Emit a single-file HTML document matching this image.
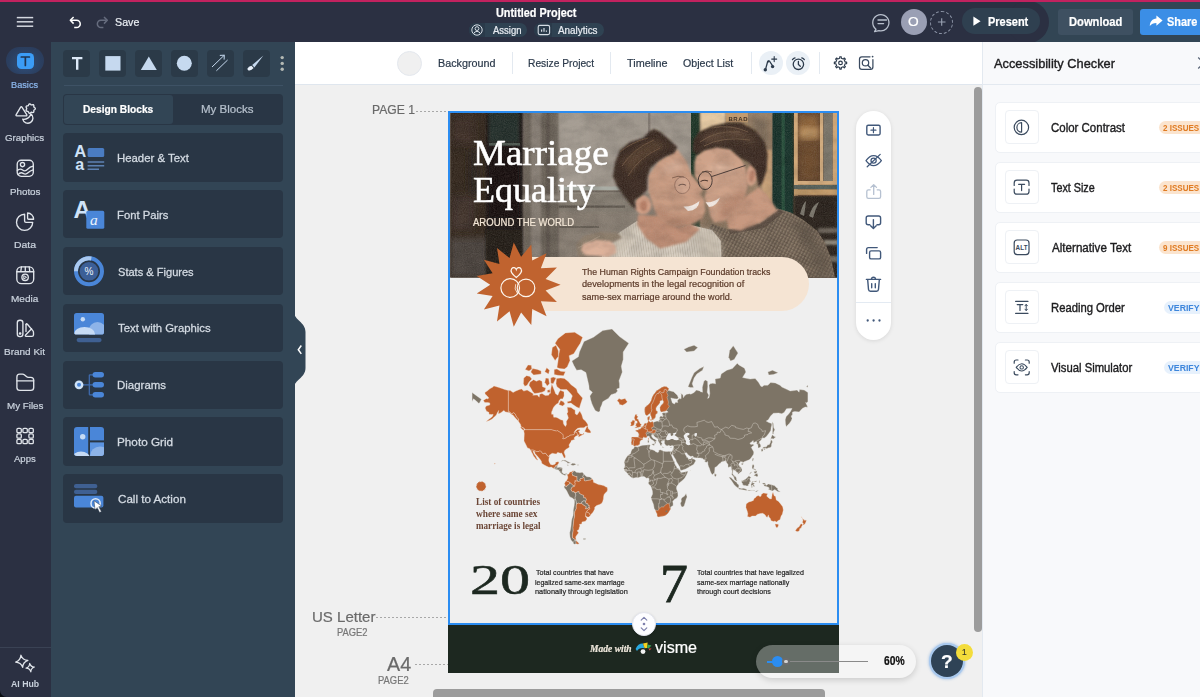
<!DOCTYPE html>
<html lang="en"><head><meta charset="utf-8"><title>Untitled Project - Visme</title>
<style>
*{box-sizing:border-box;margin:0;padding:0}
html,body{width:1200px;height:697px;overflow:hidden;background:#f0f0f0;font-family:"Liberation Sans",sans-serif}
.a{position:absolute}
.t{position:absolute;white-space:pre;line-height:1}
svg{position:absolute;overflow:visible}
#hdr{left:0;top:0;width:1200px;height:42px;background:#2b3042}
#pink{left:0;top:0;width:1200px;height:1.6px;background:#c2225f}
#hdrR{left:1027px;top:2px;width:173px;height:40px;background:#324554}
#hdrCap{left:1007px;top:1px;width:42px;height:42px;border-radius:21px;background:#2b3042}
#nav{left:0;top:42px;width:51px;height:655px;background:#2b3042}
#panel{left:51px;top:42px;width:244px;height:655px;background:#324555}
#tbar{left:295px;top:42px;width:688px;height:43px;background:#fff;border-bottom:1px solid #dfe6ee}
#rp{left:982px;top:42px;width:218px;height:655px;background:#f8f9fb;border-left:1px solid #e3e9f0}
#rph{left:983px;top:42px;width:217px;height:43px;border-bottom:1px solid #e3e9f0}
.tool{width:27px;height:27px;top:50px;border-radius:4px;background:#2b3a48}
.card{left:63px;width:220px;height:48.4px;border-radius:4px;background:#293645}
.rc{left:994.5px;width:215px;height:51.5px;border-radius:5px;background:#fff;border:1px solid #eef1f5}
.ib{left:1004.5px;width:34px;height:34px;border-radius:4px;background:#fff;border:1px solid #eef1f5}
.badge{height:13.5px;border-radius:7px;left:1159px;width:60px}
.vsep{width:1px;background:#e3e9f0;top:52px;height:22px}
</style></head><body>
<div id="hdr" class="a"></div>
<div id="hdrR" class="a"></div>
<div id="hdrCap" class="a"></div>
<div id="pink" class="a"></div>
<div id="nav" class="a"></div>
<div id="panel" class="a"></div>
<div id="tbar" class="a"></div>
<div id="rp" class="a"></div>
<div id="rph" class="a"></div>
<span class="t" style="left:115.03px;top:17.37px;font:normal 400 11.5px/1 'Liberation Sans', sans-serif;color:#e8ecf2;transform:scaleX(0.9307);transform-origin:0 0;-webkit-text-stroke:0.22px #e8ecf2;">Save</span>
<span class="t" style="left:496.04px;top:7.19px;font:normal 700 12.3px/1 'Liberation Sans', sans-serif;color:#ffffff;transform:scaleX(0.8844);transform-origin:0 0;-webkit-text-stroke:0.22px #ffffff;">Untitled Project</span>
<div class="a" style="left:468.7px;top:23px;width:58.8px;height:14px;border-radius:7px;background:#2f4252"></div>
<div class="a" style="left:468.7px;top:23px;width:16.5px;height:14px;border-radius:7px 0 0 7px;background:#2a3a4a"></div>
<div class="a" style="left:533.8px;top:23px;width:70.2px;height:14px;border-radius:7px;background:#2f4252"></div>
<div class="a" style="left:533.8px;top:23px;width:18px;height:14px;border-radius:7px 0 0 7px;background:#2a3a4a"></div>
<span class="t" style="left:493.00px;top:26.04px;font:normal 400 10px/1 'Liberation Sans', sans-serif;color:#e8ecf2;transform:scaleX(0.9492);transform-origin:0 0;-webkit-text-stroke:0.22px #e8ecf2;">Assign</span>
<span class="t" style="left:558.00px;top:26.04px;font:normal 400 10px/1 'Liberation Sans', sans-serif;color:#e8ecf2;transform:scaleX(0.9887);transform-origin:0 0;-webkit-text-stroke:0.22px #e8ecf2;">Analytics</span>
<div class="a" style="left:961.7px;top:8px;width:78.3px;height:26px;border-radius:13px;background:#2f4050"></div>
<span class="t" style="left:987.83px;top:15.79px;font:normal 700 12.3px/1 'Liberation Sans', sans-serif;color:#ffffff;transform:scaleX(0.8927);transform-origin:0 0;-webkit-text-stroke:0.22px #ffffff;">Present</span>
<div class="a" style="left:1058.3px;top:8.7px;width:75px;height:26.3px;border-radius:3px;background:#3e5061"></div>
<span class="t" style="left:1069.32px;top:15.89px;font:normal 700 12.3px/1 'Liberation Sans', sans-serif;color:#ffffff;transform:scaleX(0.9083);transform-origin:0 0;-webkit-text-stroke:0.22px #ffffff;">Download</span>
<div class="a" style="left:1140px;top:8.7px;width:70px;height:26.3px;border-radius:3px;background:#3b8ee6"></div>
<span class="t" style="left:1167.06px;top:15.89px;font:normal 700 12.3px/1 'Liberation Sans', sans-serif;color:#ffffff;transform:scaleX(0.8872);transform-origin:0 0;-webkit-text-stroke:0.22px #ffffff;">Share</span>
<div class="a" style="left:900.7px;top:9px;width:26px;height:26px;border-radius:13px;background:#9a9fb4"></div>
<span class="t" style="left:908.47px;top:15.30px;font:normal 400 13px/1 'Liberation Sans', sans-serif;color:#ffffff;transform:scaleX(1.0556);transform-origin:0 0;-webkit-text-stroke:0.22px #ffffff;">O</span>
<div class="a" style="left:930.2px;top:10.5px;width:23px;height:23px;border-radius:12px;border:1px dashed #8a92a4"></div>
<span class="t" style="left:11.18px;top:79.87px;font:normal 400 9.6px/1 'Liberation Sans', sans-serif;color:#8db8ee;transform:scaleX(0.9578);transform-origin:0 0;-webkit-text-stroke:0.22px #8db8ee;">Basics</span>
<span class="t" style="left:5.49px;top:133.37px;font:normal 400 9.6px/1 'Liberation Sans', sans-serif;color:#c9d1dc;transform:scaleX(1.0160);transform-origin:0 0;-webkit-text-stroke:0.22px #c9d1dc;">Graphics</span>
<span class="t" style="left:9.94px;top:186.87px;font:normal 400 9.6px/1 'Liberation Sans', sans-serif;color:#c9d1dc;transform:scaleX(1.0191);transform-origin:0 0;-webkit-text-stroke:0.22px #c9d1dc;">Photos</span>
<span class="t" style="left:13.68px;top:240.37px;font:normal 400 9.6px/1 'Liberation Sans', sans-serif;color:#c9d1dc;transform:scaleX(1.0872);transform-origin:0 0;-webkit-text-stroke:0.22px #c9d1dc;">Data</span>
<span class="t" style="left:10.92px;top:293.87px;font:normal 400 9.6px/1 'Liberation Sans', sans-serif;color:#c9d1dc;transform:scaleX(1.0431);transform-origin:0 0;-webkit-text-stroke:0.22px #c9d1dc;">Media</span>
<span class="t" style="left:4.22px;top:347.37px;font:normal 400 9.6px/1 'Liberation Sans', sans-serif;color:#c9d1dc;transform:scaleX(1.0400);transform-origin:0 0;-webkit-text-stroke:0.22px #c9d1dc;">Brand Kit</span>
<span class="t" style="left:6.54px;top:400.87px;font:normal 400 9.6px/1 'Liberation Sans', sans-serif;color:#c9d1dc;transform:scaleX(1.0187);transform-origin:0 0;-webkit-text-stroke:0.22px #c9d1dc;">My Files</span>
<span class="t" style="left:14.30px;top:454.37px;font:normal 400 9.6px/1 'Liberation Sans', sans-serif;color:#c9d1dc;transform:scaleX(0.9953);transform-origin:0 0;-webkit-text-stroke:0.22px #c9d1dc;">Apps</span>
<div class="a" style="left:5.6px;top:46.9px;width:38.8px;height:27.5px;border-radius:14px;background:radial-gradient(ellipse at 50% 60%,#30507c 0%,#2b3f60 60%,#2a3854 100%)"></div>
<div class="a" style="left:16.9px;top:52.5px;width:16.9px;height:16.5px;border-radius:4.5px;background:#3b9cf6"></div>
<div class="a" style="left:0;top:647px;width:51px;height:1px;background:#3a4254"></div>
<span class="t" style="left:11.05px;top:680.15px;font:normal 700 8.8px/1 'Liberation Sans', sans-serif;color:#c9d1dc;transform:scaleX(0.9946);transform-origin:0 0;">AI Hub</span>
<div class="a tool" style="left:63.40px"></div>
<div class="a tool" style="left:99.25px"></div>
<div class="a tool" style="left:135.10px"></div>
<div class="a tool" style="left:170.95px"></div>
<div class="a tool" style="left:206.80px"></div>
<div class="a tool" style="left:242.65px"></div>
<div class="a" style="left:63.5px;top:84.5px;width:219px;height:1px;background:#3e5265"></div>
<div class="a" style="left:63px;top:93.6px;width:220.3px;height:31px;border-radius:4px;background:#293645"></div>
<div class="a" style="left:64px;top:94.6px;width:108.5px;height:29px;border-radius:3px;background:#324555"></div>
<span class="t" style="left:82.70px;top:103.59px;font:normal 700 11px/1 'Liberation Sans', sans-serif;color:#ffffff;transform:scaleX(0.9271);transform-origin:0 0;-webkit-text-stroke:0.22px #ffffff;">Design Blocks</span>
<span class="t" style="left:200.65px;top:103.59px;font:normal 400 11px/1 'Liberation Sans', sans-serif;color:#b6c0cc;transform:scaleX(1.0462);transform-origin:0 0;-webkit-text-stroke:0.22px #b6c0cc;">My Blocks</span>
<div class="a card" style="top:133.20px"></div>
<span class="t" style="left:117.32px;top:151.88px;font:normal 400 11.6px/1 'Liberation Sans', sans-serif;color:#d3dae2;transform:scaleX(0.9813);transform-origin:0 0;-webkit-text-stroke:0.3px #d3dae2;">Header &amp; Text</span>
<div class="a card" style="top:190.03px"></div>
<span class="t" style="left:117.33px;top:208.71px;font:normal 400 11.6px/1 'Liberation Sans', sans-serif;color:#d3dae2;transform:scaleX(0.9709);transform-origin:0 0;-webkit-text-stroke:0.3px #d3dae2;">Font Pairs</span>
<div class="a card" style="top:246.86px"></div>
<span class="t" style="left:117.82px;top:265.54px;font:normal 400 11.6px/1 'Liberation Sans', sans-serif;color:#d3dae2;transform:scaleX(0.9546);transform-origin:0 0;-webkit-text-stroke:0.3px #d3dae2;">Stats &amp; Figures</span>
<div class="a card" style="top:303.69px"></div>
<span class="t" style="left:118.06px;top:322.37px;font:normal 400 11.6px/1 'Liberation Sans', sans-serif;color:#d3dae2;transform:scaleX(0.9787);transform-origin:0 0;-webkit-text-stroke:0.3px #d3dae2;">Text with Graphics</span>
<div class="a card" style="top:360.52px"></div>
<span class="t" style="left:117.31px;top:379.20px;font:normal 400 11.6px/1 'Liberation Sans', sans-serif;color:#d3dae2;transform:scaleX(0.9886);transform-origin:0 0;-webkit-text-stroke:0.3px #d3dae2;">Diagrams</span>
<div class="a card" style="top:417.35px"></div>
<span class="t" style="left:117.29px;top:436.03px;font:normal 400 11.6px/1 'Liberation Sans', sans-serif;color:#d3dae2;transform:scaleX(1.0121);transform-origin:0 0;-webkit-text-stroke:0.3px #d3dae2;">Photo Grid</span>
<div class="a card" style="top:474.18px"></div>
<span class="t" style="left:117.80px;top:492.86px;font:normal 400 11.6px/1 'Liberation Sans', sans-serif;color:#d3dae2;transform:scaleX(1.0030);transform-origin:0 0;-webkit-text-stroke:0.3px #d3dae2;">Call to Action</span>
<svg style="left:294px;top:312px" width="12" height="76" viewBox="0 0 12 76"><path d="M0 0 C0 8 11.5 10 11.5 20 L11.5 56 C11.5 66 0 68 0 76 Z" fill="#324555"/><path d="M7.3 33.5 L4.3 37.7 L7.3 41.9" fill="none" stroke="#fff" stroke-width="1.5"/></svg>
<div class="a" style="left:396.5px;top:50.5px;width:25px;height:25px;border-radius:13px;background:#f0f0f0;border:1px solid #e4e8ee"></div>
<span class="t" style="left:438.07px;top:56.98px;font:normal 400 11.6px/1 'Liberation Sans', sans-serif;color:#2c3a4b;transform:scaleX(0.9295);transform-origin:0 0;-webkit-text-stroke:0.22px #2c3a4b;">Background</span>
<span class="t" style="left:527.62px;top:56.98px;font:normal 400 11.6px/1 'Liberation Sans', sans-serif;color:#2c3a4b;transform:scaleX(0.8841);transform-origin:0 0;-webkit-text-stroke:0.22px #2c3a4b;">Resize Project</span>
<span class="t" style="left:626.77px;top:56.98px;font:normal 400 11.6px/1 'Liberation Sans', sans-serif;color:#2c3a4b;transform:scaleX(0.9357);transform-origin:0 0;-webkit-text-stroke:0.22px #2c3a4b;">Timeline</span>
<span class="t" style="left:682.84px;top:56.98px;font:normal 400 11.6px/1 'Liberation Sans', sans-serif;color:#2c3a4b;transform:scaleX(0.9161);transform-origin:0 0;-webkit-text-stroke:0.22px #2c3a4b;">Object List</span>
<div class="a vsep" style="left:511.5px"></div>
<div class="a vsep" style="left:610.3px"></div>
<div class="a vsep" style="left:750.5px"></div>
<div class="a vsep" style="left:819px"></div>
<div class="a" style="left:759px;top:51px;width:24px;height:24px;border-radius:12px;background:#eaf0f6"></div>
<div class="a" style="left:786.3px;top:51px;width:24px;height:24px;border-radius:12px;background:#eaf0f6"></div>
<span class="t" style="left:994.00px;top:57.00px;font:normal 400 13px/1 'Liberation Sans', sans-serif;color:#1d1d1f;transform:scaleX(0.9853);transform-origin:0 0;-webkit-text-stroke:0.38px #1d1d1f;">Accessibility Checker</span>
<div class="a rc" style="top:101.5px"></div>
<div class="a ib" style="top:110.2px"></div>
<span class="t" style="left:1051.13px;top:121.57px;font:normal 400 12.2px/1 'Liberation Sans', sans-serif;color:#1d1d1f;transform:scaleX(0.9410);transform-origin:0 0;-webkit-text-stroke:0.38px #1d1d1f;">Color Contrast</span>
<div class="a badge" style="top:120.9px;background:#fbe4ce"></div>
<span class="t" style="left:1163.45px;top:124.76px;font:normal 700 8.2px/1 'Liberation Sans', sans-serif;color:#e07b22;transform:scaleX(0.9821);transform-origin:0 0;">2 ISSUES</span>
<div class="a rc" style="top:161.5px"></div>
<div class="a ib" style="top:170.2px"></div>
<span class="t" style="left:1051.38px;top:181.57px;font:normal 400 12.2px/1 'Liberation Sans', sans-serif;color:#1d1d1f;transform:scaleX(0.8841);transform-origin:0 0;-webkit-text-stroke:0.38px #1d1d1f;">Text Size</span>
<div class="a badge" style="top:180.9px;background:#fbe4ce"></div>
<span class="t" style="left:1163.45px;top:184.76px;font:normal 700 8.2px/1 'Liberation Sans', sans-serif;color:#e07b22;transform:scaleX(0.9821);transform-origin:0 0;">2 ISSUES</span>
<div class="a rc" style="top:221.5px"></div>
<div class="a ib" style="top:230.2px"></div>
<span class="t" style="left:1051.60px;top:241.57px;font:normal 400 12.2px/1 'Liberation Sans', sans-serif;color:#1d1d1f;transform:scaleX(0.9530);transform-origin:0 0;-webkit-text-stroke:0.38px #1d1d1f;">Alternative Text</span>
<div class="a badge" style="top:240.9px;background:#fbe4ce"></div>
<span class="t" style="left:1163.45px;top:244.76px;font:normal 700 8.2px/1 'Liberation Sans', sans-serif;color:#e07b22;transform:scaleX(0.9821);transform-origin:0 0;">9 ISSUES</span>
<div class="a rc" style="top:281.5px"></div>
<div class="a ib" style="top:290.2px"></div>
<span class="t" style="left:1050.68px;top:301.57px;font:normal 400 12.2px/1 'Liberation Sans', sans-serif;color:#1d1d1f;transform:scaleX(0.9232);transform-origin:0 0;-webkit-text-stroke:0.38px #1d1d1f;">Reading Order</span>
<div class="a badge" style="top:300.9px;background:#e7f1fc;left:1163.5px"></div>
<span class="t" style="left:1168.33px;top:304.76px;font:normal 700 8.2px/1 'Liberation Sans', sans-serif;color:#3d86dc;transform:scaleX(1.0655);transform-origin:0 0;">VERIFY</span>
<div class="a rc" style="top:341.5px"></div>
<div class="a ib" style="top:350.2px"></div>
<span class="t" style="left:1051.37px;top:361.57px;font:normal 400 12.2px/1 'Liberation Sans', sans-serif;color:#1d1d1f;transform:scaleX(0.9249);transform-origin:0 0;-webkit-text-stroke:0.38px #1d1d1f;">Visual Simulator</span>
<div class="a badge" style="top:360.9px;background:#e7f1fc;left:1163.5px"></div>
<span class="t" style="left:1168.33px;top:364.76px;font:normal 700 8.2px/1 'Liberation Sans', sans-serif;color:#3d86dc;transform:scaleX(1.0655);transform-origin:0 0;">VERIFY</span>
<div class="a" style="left:974px;top:86.5px;width:7.7px;height:545px;border-radius:4px;background:#9c9c9c"></div>
<div class="a" style="left:432.5px;top:688.5px;width:392px;height:12px;border-radius:4px;background:#9c9c9c"></div>
<span class="t" style="left:371.59px;top:103.24px;font:normal 400 13.3px/1 'Liberation Sans', sans-serif;color:#6a6a6a;transform:scaleX(0.9121);transform-origin:0 0;-webkit-text-stroke:0.22px #6a6a6a;">PAGE 1</span>
<span class="t" style="left:311.79px;top:608.58px;font:normal 400 15.5px/1 'Liberation Sans', sans-serif;color:#6a6a6a;transform:scaleX(0.9688);transform-origin:0 0;-webkit-text-stroke:0.22px #6a6a6a;">US Letter</span>
<span class="t" style="left:337.32px;top:627.90px;font:normal 400 10.4px/1 'Liberation Sans', sans-serif;color:#777;transform:scaleX(0.9008);transform-origin:0 0;-webkit-text-stroke:0.22px #777;">PAGE2</span>
<span class="t" style="left:387.00px;top:655.49px;font:normal 400 19.5px/1 'Liberation Sans', sans-serif;color:#6a6a6a;transform:scaleX(1.0108);transform-origin:0 0;-webkit-text-stroke:0.22px #6a6a6a;">A4</span>
<span class="t" style="left:378.02px;top:675.50px;font:normal 400 10.4px/1 'Liberation Sans', sans-serif;color:#777;transform:scaleX(0.9038);transform-origin:0 0;-webkit-text-stroke:0.22px #777;">PAGE2</span>
<div class="a" style="left:416px;top:110.5px;width:32px;height:1px;background:repeating-linear-gradient(90deg,#a8a8a8 0 2px,transparent 2px 4px)"></div>
<div class="a" style="left:376px;top:616.5px;width:72px;height:1px;background:repeating-linear-gradient(90deg,#a8a8a8 0 2px,transparent 2px 4px)"></div>
<div class="a" style="left:415px;top:664px;width:33px;height:1px;background:repeating-linear-gradient(90deg,#a8a8a8 0 2px,transparent 2px 4px)"></div>
<div class="a" style="left:448.3px;top:110.8px;width:391px;height:514px;background:#efefef"></div>
<div class="a" style="left:448.3px;top:624.5px;width:391px;height:48.3px;background:#1d2820"></div>
<svg style="left:0;top:0" width="1200" height="697" viewBox="0 0 1200 697"><defs><filter id="b1" x="-30%" y="-30%" width="160%" height="160%"><feGaussianBlur stdDeviation="1.3"/></filter><filter id="b2" x="-30%" y="-30%" width="160%" height="160%"><feGaussianBlur stdDeviation="3.2"/></filter><filter id="b0" x="-30%" y="-30%" width="160%" height="160%"><feGaussianBlur stdDeviation="0.7"/></filter><filter id="grain" x="0" y="0" width="100%" height="100%"><feTurbulence type="fractalNoise" baseFrequency="0.9" numOctaves="2" seed="3" result="n"/><feColorMatrix in="n" type="matrix" values="0 0 0 0 0.5  0 0 0 0 0.45  0 0 0 0 0.4  0.9 0.9 0.9 0 -0.95"/></filter><filter id="blot" x="0" y="0" width="100%" height="100%"><feTurbulence type="fractalNoise" baseFrequency="0.06 0.09" numOctaves="3" seed="8" result="n"/><feColorMatrix in="n" type="matrix" values="0 0 0 0 0  0 0 0 0 0  0 0 0 0 0  1.6 1.6 0 0 -1.25"/></filter><clipPath id="pc"><rect x="450.3" y="112.8" width="387" height="164.8"/></clipPath><linearGradient id="wall" x1="0" y1="0" x2="0" y2="1"><stop offset="0" stop-color="#a59c92"/><stop offset="0.5" stop-color="#918779"/><stop offset="1" stop-color="#726960"/></linearGradient><pattern id="knit" width="3.2" height="3.2" patternUnits="userSpaceOnUse" patternTransform="rotate(28)"><rect width="3.2" height="3.2" fill="#6c5e50"/><rect width="1.4" height="3.2" fill="#8a7a68"/><rect y="1.4" width="3.2" height="0.8" fill="#5a4d42" opacity="0.7"/></pattern><pattern id="rib" width="2.4" height="6" patternUnits="userSpaceOnUse" patternTransform="rotate(-8)"><rect width="2.4" height="6" fill="#d9d0c3"/><rect width="0.8" height="6" fill="#c4baab"/></pattern></defs>
<g clip-path="url(#pc)">
<rect x="450" y="112" width="388" height="166" fill="url(#wall)"/>
<rect x="446" y="108" width="44" height="172" fill="#33261f" filter="url(#b1)"/>
<rect x="486" y="108" width="38" height="172" fill="#1a1412" filter="url(#b1)"/>
<rect x="489" y="112" width="30" height="31" fill="#232d29" filter="url(#b1)"/>
<rect x="489" y="143" width="31" height="2.6" fill="#4d5851" filter="url(#b0)"/>
<rect x="489" y="148" width="30" height="70" fill="#151010" filter="url(#b1)"/>
<rect x="450" y="238" width="38" height="40" fill="#4a433c" filter="url(#b2)"/>
<rect x="452" y="196" width="22" height="34" fill="#3f322b" filter="url(#b2)"/>
<rect x="468" y="150" width="12" height="44" fill="#2a211e" filter="url(#b2)"/>
<rect x="452" y="118" width="22" height="26" fill="#3c2e27" filter="url(#b2)"/>
<rect x="486" y="230" width="36" height="48" fill="#211a18" filter="url(#b1)"/>
<rect x="523" y="108" width="37" height="172" fill="#6b6259" filter="url(#b1)"/>
<rect x="531" y="108" width="10" height="172" fill="#877e74" filter="url(#b1)"/>
<rect x="546.5" y="108" width="3" height="172" fill="#585048" filter="url(#b1)"/>
<rect x="559" y="108" width="134" height="86" fill="#9f978d" filter="url(#b1)"/>
<rect x="560" y="108" width="30" height="86" fill="#a59d93" filter="url(#b2)"/>
<rect x="648" y="108" width="2.4" height="30" fill="#80786f" filter="url(#b0)"/>
<rect x="559" y="186.5" width="62" height="3.6" fill="#a9ada5" filter="url(#b0)"/>
<rect x="559" y="190.5" width="62" height="2" fill="#6f685f" filter="url(#b0)"/>
<rect x="559" y="193" width="131" height="20" fill="#847b71" filter="url(#b1)"/>
<rect x="559" y="205.5" width="66" height="2.2" fill="#5d564e" filter="url(#b0)"/>
<rect x="559" y="213" width="90" height="66" fill="#877d72" filter="url(#b1)"/>
<rect x="523" y="195" width="40" height="5" fill="#90887e" filter="url(#b1)"/>
<rect x="559" y="226" width="40" height="2" fill="#6a6259" filter="url(#b0)"/>
<rect x="691" y="108" width="9.6" height="124" fill="#1b3428" filter="url(#b0)"/>
<rect x="700" y="108" width="74" height="134" fill="#8b7660" filter="url(#b1)"/>
<rect x="700.5" y="111" width="25" height="25" fill="#e9cca4" filter="url(#b1)"/>
<rect x="726" y="112.5" width="22" height="10" fill="#c39b6d" filter="url(#b0)"/>
<text x="728.4" y="120.8" font-family="Liberation Sans, sans-serif" font-weight="700" font-size="6" fill="#3a2a1e" letter-spacing="0.6" filter="url(#b0)">BRAD</text>
<rect x="726" y="123" width="22" height="10" fill="#a88a68" filter="url(#b1)"/>
<rect x="749" y="112" width="23" height="84" fill="#9b8268" filter="url(#b1)"/>
<rect x="752" y="118" width="16" height="30" fill="#7c6a58" filter="url(#b2)"/>
<rect x="762" y="150" width="10" height="52" fill="#c9a278" filter="url(#b1)"/>
<rect x="772.5" y="108" width="22" height="172" fill="#19332a" filter="url(#b0)"/>
<rect x="781.6" y="108" width="3.2" height="172" fill="#26503b" filter="url(#b0)"/>
<rect x="794" y="108" width="46" height="172" fill="#5b3f2a" filter="url(#b1)"/>
<rect x="798" y="114" width="21" height="28" fill="#8d6239" filter="url(#b2)"/>
<rect x="799" y="142" width="20" height="38" fill="#6c492b" filter="url(#b2)"/>
<rect x="800" y="128" width="18" height="10" fill="#c59a66" filter="url(#b2)"/>
<rect x="794" y="108" width="3.8" height="88" fill="#d3a978" filter="url(#b0)"/>
<rect x="820" y="108" width="3.2" height="76" fill="#d9b181" filter="url(#b0)"/>
<rect x="823.4" y="108" width="9.4" height="76" fill="#7d786c" filter="url(#b0)"/>
<rect x="832.8" y="108" width="5.4" height="76" fill="#d1a775" filter="url(#b0)"/>
<rect x="794" y="181" width="44" height="3.8" fill="#d3ab7b" filter="url(#b0)"/>
<rect x="794" y="185" width="44" height="4.4" fill="#54605a" filter="url(#b0)"/>
<rect x="794" y="189.4" width="44" height="6" fill="#c79d6b" filter="url(#b0)"/>
<rect x="794" y="196" width="44" height="84" fill="#2a211b" filter="url(#b1)"/>
<path d="M800 214 Q803 203 806 201 Q805 210 804 216 Z M809 216 Q813 204 819 202 Q815 210 813 218 Z" fill="#7a766c" filter="url(#b0)"/>
<rect x="818" y="228" width="20" height="5" fill="#6a6258" filter="url(#b1)"/>
<rect x="824" y="240" width="14" height="5" fill="#8a8478" filter="url(#b1)"/>
<rect x="826" y="256" width="12" height="6" fill="#6f6a60" filter="url(#b1)"/>
<path d="M700 240 L712 224 L728.5 229.5 L760.6 222.5 L777.7 208.4 L790.8 212.4 L802.8 219.4 L816.9 230.5 L824.9 242.5 L831 258 L836 282 L696 282 Z" fill="url(#knit)" filter="url(#b0)"/>
<path d="M728.5 229.5 L760.6 223.5 L778.7 209.4 L784 212 L764 228 L730 234 Z" fill="#5b4e43" filter="url(#b0)"/>
<path d="M790 216 L812 230 L826 250 L832 280 L818 280 L808 250 L792 228 Z" fill="#5f5247" filter="url(#b2)" opacity="0.55"/>
<path d="M726.5 219.4 L743.6 198.3 L758.6 187.3 L766.7 194.3 L777.7 210.4 L760.6 222.5 L740.6 230.5 L728.5 228.5 Z" fill="#c9987e" filter="url(#b1)"/>
<path d="M696.4 155.2 L704.4 150.2 L716.5 147.1 L730.5 149.2 L740.6 158.2 L745.6 168.2 L747.6 186.3 L743.6 198.3 L736.5 210.4 L726.5 219.4 L714.5 222.5 L710.4 216.4 L708.4 206.4 L704.4 198.3 L706.4 190.3 L700.4 184.3 L694.4 176.3 L694.4 162.2 Z" fill="#d0a288" filter="url(#b1)"/>
<path d="M722 202 L744 188 L746 197 L737 210 L727 219 L716 222 Z" fill="#b98870" filter="url(#b2)"/>
<path d="M704 168 L722 164 L736 170 L722 172 Z" fill="#e3bba3" filter="url(#b2)"/>
<ellipse cx="751.6" cy="175.3" rx="6" ry="10.6" fill="#d9a58a" filter="url(#b1)" transform="rotate(8 751.6 175.3)"/>
<ellipse cx="752" cy="176" rx="2.6" ry="6" fill="#b87f68" filter="url(#b1)" transform="rotate(8 752 176)"/>
<path d="M692.4 150.2 L693.4 140.1 L698.4 132.1 L712.4 126.1 L728.5 122.6 L740.6 122.6 L754.6 130.1 L764.7 142.1 L767.7 154.2 L766.7 170.2 L762.7 182.3 L758.6 187.3 L755.6 170.2 L748.6 162.2 L740.6 158.2 L730.5 149.2 L716.5 147.1 L704.4 150.2 L696.4 155.2 Z" fill="#3b2c22" filter="url(#b1)"/>
<path d="M702 138 L716 131 L736 128 L752 136 L758 146 L744 140 L726 138 L708 144 Z" fill="#5b4534" filter="url(#b2)"/>
<path d="M700 142 Q716 130 740 132 M704 146 Q722 136 750 140 M712 128 Q730 124 748 132" fill="none" stroke="#6c5440" stroke-width="1" filter="url(#b0)"/>
<path d="M705.5 202 Q712 203.5 720 197.5 Q717 206.5 709 207 Z" fill="#f3eae4" filter="url(#b0)"/>
<path d="M702 172 Q707 170 712 172" fill="none" stroke="#7a5a4a" stroke-width="1" filter="url(#b0)"/>
<path d="M600 262 L606.7 243.7 L620 232 L637 221 L660 236 L690.7 225 L712 230 L721 241 L722 282 L590 282 Z" fill="url(#rib)" filter="url(#b0)"/>
<path d="M606 244 L622 232 L638 224 L632 240 L616 256 L604 266 Z" fill="#c7bdae" filter="url(#b2)" opacity="0.7"/>
<path d="M690 228 L712 230 L721 242 L722 280 L704 280 L700 250 Z" fill="#c2b8a9" filter="url(#b2)" opacity="0.7"/>
<path d="M638.2 214.4 L658 216 L678.3 227.5 L690 224 L700 229 L686 242 L660.2 248.6 L646.2 238.5 L637.1 224.5 Z" fill="#c18e74" filter="url(#b1)"/>
<path d="M658.2 161.2 L677.3 149.2 L686.3 161.2 L691.4 174.3 L696.4 180.3 L703.4 189.3 L700.4 194.3 L704.4 200.4 L705.4 210.4 L702.4 218.4 L690.4 224.5 L678.3 226.5 L666.3 224.5 L658.2 216.4 L653.2 206.4 L648.2 190.3 L648.2 176.3 Z" fill="#cb9c82" filter="url(#b1)"/>
<path d="M654 204 L672 216 L698 216 L702 219 L690 225 L678 227 L666 225 L658 217 Z" fill="#b4846c" filter="url(#b2)"/>
<path d="M660 170 L676 160 L686 166 L672 174 Z" fill="#dfb49b" filter="url(#b2)"/>
<ellipse cx="643.2" cy="205" rx="8.2" ry="9.6" fill="#d39f85" filter="url(#b1)"/>
<ellipse cx="643.6" cy="205.6" rx="3.6" ry="5.2" fill="#b47c64" filter="url(#b1)"/>
<path d="M613 176.3 L615 162.2 L620 150.2 L630 142.1 L643.2 138.1 L650 131 L654.2 129 L660.2 132.1 L667.3 138.1 L677.3 147.1 L674.3 153.2 L666.3 156.2 L658.2 161.2 L650.2 168.2 L647.2 178.3 L647.2 190.3 L640.2 196.3 L634.1 200.4 L636 209 L632 206.4 L624.1 196.3 L617 186.3 Z" fill="#3a2a20" filter="url(#b1)"/>
<path d="M624 160 L640 146 L658 140 L666 146 L652 152 L638 164 L630 176 Z" fill="#57402f" filter="url(#b2)"/>
<path d="M622 166 Q634 148 654 140 M628 176 Q638 158 660 148 M620 152 Q632 142 648 138" fill="none" stroke="#6a503c" stroke-width="1" filter="url(#b0)"/>
<path d="M683.5 206.5 Q692 207 699.5 201 Q698.5 210.5 688 211 Z" fill="#f3eae4" filter="url(#b0)"/>
<path d="M672 178 Q678 175 684 177" fill="none" stroke="#8a6654" stroke-width="1" filter="url(#b0)"/>
<path d="M678.6 185.6 Q682.3 183 686 185.4" fill="none" stroke="#4a3228" stroke-width="1.1" filter="url(#b0)"/>
<path d="M700.5 181.6 Q704 179.2 708 181" fill="none" stroke="#4a3228" stroke-width="1.1" filter="url(#b0)"/>
<ellipse cx="682.3" cy="185.3" rx="7.6" ry="8.3" fill="#e8c4b0" fill-opacity="0.25" stroke="#8a6456" stroke-width="0.7" filter="url(#b0)"/>
<g fill="none" stroke="#3a2e2a" stroke-width="0.9" filter="url(#b0)"><ellipse cx="705.2" cy="180.6" rx="7" ry="9"/><path d="M711.6 176.6 L745.6 165.4"/></g>
<path d="M576 244 L584 236 L600 232 L618 233 L622 238 L606 246 L590 256 L578 258 Z" fill="#8b7b6a" filter="url(#b1)"/>
<path d="M578 248 L600 236 M582 254 L606 240" stroke="#a39380" stroke-width="1" fill="none" filter="url(#b0)"/>
<path d="M583 244 L596 240 L610 241 L615.6 246 L616 253 L608 257 L596 256 L585 255 L581 250 Z" fill="#e0b39b" filter="url(#b1)"/>
<rect x="450" y="112" width="388" height="166" filter="url(#blot)" opacity="0.10"/>
<rect x="450" y="112" width="388" height="166" filter="url(#grain)" opacity="0.16"/>
</g></svg>
<span class="t" style="left:473.15px;top:136.32px;font:normal 400 35.2px/1 'Liberation Serif', serif;color:#ffffff;transform:scaleX(1.0517);transform-origin:0 0;-webkit-text-stroke:0.55px #ffffff;">Marriage</span>
<span class="t" style="left:473.18px;top:173.02px;font:normal 400 35.2px/1 'Liberation Serif', serif;color:#ffffff;transform:scaleX(1.0237);transform-origin:0 0;-webkit-text-stroke:0.55px #ffffff;">Equality</span>
<span class="t" style="left:473.20px;top:218.40px;font:normal 400 10.4px/1 'Liberation Sans', sans-serif;color:#f3e6d6;transform:scaleX(0.9178);transform-origin:0 0;-webkit-text-stroke:0.22px #f3e6d6;">AROUND THE WORLD</span>
<div class="a" style="left:505px;top:257px;width:303.5px;height:54px;border-radius:27px;background:#f5e4d3"></div>
<svg style="left:0;top:0" width="1200" height="697" viewBox="0 0 1200 697"><polygon points="560.60,284.70 545.59,290.52 556.93,301.95 540.85,301.16 546.57,316.21 532.20,308.95 531.30,325.02 521.13,312.55 513.77,326.87 509.55,311.33 497.00,321.42 499.46,305.51 483.90,309.62 492.62,296.09 476.73,293.52 490.20,284.70 476.73,275.88 492.62,273.31 483.90,259.78 499.46,263.89 497.00,247.98 509.55,258.07 513.77,242.53 521.13,256.85 531.30,244.38 532.20,260.45 546.57,253.19 540.85,268.24 556.93,267.45 545.59,278.88" fill="#c0632f"/><g fill="none" stroke="#fdf6ee" stroke-width="1.2"><circle cx="510.2" cy="288" r="9.3"/><circle cx="526" cy="287.9" r="8.8"/><path d="M517.9 284.2 A8.6 8.6 0 0 0 519.6 293.2" stroke-width="0.8" transform="translate(-2.2 0)"/><path d="M516.3 277.4 C512.2 274.4 510 271.4 511.6 268.8 C513 266.8 515.6 267.6 516.3 269.6 C517 267.6 519.6 266.8 521 268.8 C522.6 271.4 520.4 274.4 516.3 277.4 Z"/></g></svg>
<span class="t" style="left:581.97px;top:266.69px;font:normal 400 9.7px/1 'Liberation Sans', sans-serif;color:#5c3b2a;transform:scaleX(0.9083);transform-origin:0 0;-webkit-text-stroke:0.22px #5c3b2a;">The Human Rights Campaign Foundation tracks</span>
<span class="t" style="left:581.72px;top:279.19px;font:normal 400 9.7px/1 'Liberation Sans', sans-serif;color:#5c3b2a;transform:scaleX(0.9504);transform-origin:0 0;-webkit-text-stroke:0.22px #5c3b2a;">developments in the legal recognition of</span>
<span class="t" style="left:581.97px;top:291.69px;font:normal 400 9.7px/1 'Liberation Sans', sans-serif;color:#5c3b2a;transform:scaleX(0.9369);transform-origin:0 0;-webkit-text-stroke:0.22px #5c3b2a;">same-sex marriage around the world.</span>
<svg style="left:0;top:0" width="1200" height="697" viewBox="0 0 1200 697"><g fill="#7d7466" stroke="#ece8e2" stroke-width="0.35" stroke-linejoin="round"><path d="M631.7 445.1L631.1 443.0L631.8 440.3L631.4 437.7L632.5 436.9L638.3 437.3L638.9 433.9L637.9 432.2L635.7 431.1L635.6 430.4L638.5 430.1L638.3 428.7L640.2 428.9L641.5 427.0L643.2 426.2L643.7 425.3L644.4 423.8L646.7 423.3L648.0 422.2L648.0 420.6L647.6 419.0L647.7 417.3L649.8 416.0L649.6 417.9L648.9 420.6L649.3 421.4L650.3 422.2L651.2 421.9L652.6 421.6L653.2 422.4L654.9 421.7L657.3 420.9L658.2 421.6L658.7 420.8L659.6 420.1L659.6 417.6L660.1 416.4L661.1 416.0L662.7 416.9L662.8 415.0L661.9 413.4L663.3 412.8L666.1 412.8L668.2 412.1L666.6 410.8L665.9 411.0L663.3 411.5L661.5 412.1L660.5 411.1L660.1 410.0L659.9 407.4L661.0 405.6L663.0 403.5L663.7 401.8L662.6 400.0L660.1 400.9L660.0 402.6L658.7 404.6L656.8 406.4L656.0 408.0L656.1 410.6L657.5 411.5L657.3 413.2L655.7 414.5L655.5 416.4L654.9 418.6L653.7 418.6L653.3 419.8L652.1 419.9L651.8 418.6L651.2 416.6L650.5 415.0L650.4 413.6L649.8 413.4L648.9 414.1L647.5 415.3L646.5 415.5L645.2 414.3L644.8 411.9L644.7 409.6L644.9 407.7L646.5 406.0L648.4 404.6L649.8 402.9L651.2 400.4L652.1 397.2L653.5 394.7L654.9 393.0L656.8 390.6L659.1 389.3L661.9 387.3L664.3 386.4L666.6 386.7L668.9 388.7L668.0 390.3L670.8 391.1L673.6 391.7L677.3 395.2L678.4 397.7L677.3 399.1L674.5 398.8L670.8 397.9L672.4 402.9L674.5 404.1L675.5 402.2L677.8 402.6L677.3 400.7L679.2 398.6L681.1 398.8L681.2 394.2L680.4 393.2L682.9 394.7L683.4 397.7L684.6 395.7L686.6 394.2L689.9 393.7L690.8 394.2L694.1 392.5L696.4 390.1L699.7 390.9L700.6 391.7L702.5 392.2L702.3 387.3L703.9 381.3L705.3 380.0L707.6 381.3L707.8 386.7L707.2 392.2L708.8 395.2L707.6 398.4L709.0 397.7L709.8 393.5L709.0 385.3L710.0 383.8L712.8 383.2L715.6 383.8L715.1 379.1L720.2 378.1L721.2 373.9L726.8 370.2L732.4 368.6L737.3 363.2L738.9 364.9L744.5 368.2L745.9 372.1L742.6 377.4L745.0 378.1L750.1 379.1L755.2 378.4L758.5 382.3L760.8 386.2L762.2 386.7L764.1 385.3L767.8 385.3L770.6 382.6L775.3 382.9L780.0 385.3L781.8 387.0L788.3 390.1L790.2 390.9L793.9 390.6L797.0 390.1L799.1 392.2L799.5 389.5L804.2 390.1L807.9 392.5L807.9 401.5L806.5 402.9L805.6 402.4L807.3 406.0L807.5 407.2L805.1 407.0L802.3 408.4L799.1 411.9L794.9 411.5L792.5 412.1L792.4 415.0L791.1 415.9L792.1 418.6L791.1 420.9L789.3 423.5L787.7 425.0L786.2 426.8L785.5 423.8L785.2 419.8L786.2 416.4L788.2 414.6L790.2 411.9L792.1 408.6L789.7 408.4L786.5 408.8L784.1 412.5L781.8 413.7L778.6 413.0L773.4 413.2L770.6 416.0L768.3 419.8L766.2 421.1L768.8 422.5L771.6 423.5L771.8 425.0L771.1 427.5L770.8 430.4L768.8 433.4L766.4 436.5L764.1 438.2L762.7 437.7L761.9 438.7L761.0 440.3L759.4 441.6L759.0 442.1L760.7 445.1L760.7 446.8L759.9 447.6L758.0 448.1L758.0 445.7L757.6 444.3L756.6 443.9L756.9 442.1L756.0 441.5L753.5 442.7L753.2 440.5L751.0 442.5L749.8 443.0L750.8 444.4L752.7 444.2L754.3 445.1L752.4 446.3L751.3 447.4L752.7 450.0L753.6 451.6L753.8 452.9L753.4 454.5L752.0 456.6L750.6 458.6L749.2 459.8L746.6 460.8L743.6 461.9L742.9 463.0L742.4 461.8L740.8 461.8L739.5 462.8L738.7 464.2L739.8 466.4L741.0 467.2L742.0 469.6L741.9 471.3L740.0 472.5L738.4 474.1L737.8 474.2L738.0 472.9L737.0 472.4L735.9 471.2L734.7 470.4L734.1 469.7L733.3 469.8L733.0 471.5L732.6 473.6L733.8 475.6L735.0 476.0L736.3 477.8L736.6 479.8L737.2 481.0L736.4 480.9L734.5 479.6L733.7 477.1L732.8 475.8L731.7 474.8L731.9 472.9L732.1 471.0L731.4 469.1L731.1 466.7L729.6 466.7L728.9 467.4L728.0 467.0L728.0 464.4L726.5 462.5L725.8 461.6L725.4 460.5L724.2 461.3L723.0 461.5L721.2 461.9L720.7 463.1L719.3 463.7L716.8 466.5L714.9 467.5L714.8 469.9L714.5 472.6L713.7 473.6L713.0 474.0L712.3 474.7L711.2 473.2L710.2 471.0L709.5 468.6L708.4 466.2L707.9 464.2L707.8 462.3L707.5 461.5L706.1 462.5L704.4 460.9L705.6 460.2L703.9 459.7L702.7 458.4L700.2 457.9L697.5 458.0L693.6 457.6L693.0 456.1L690.8 456.5L689.0 455.5L687.4 454.0L686.6 452.7L685.3 452.9L684.8 453.4L685.3 454.5L686.6 456.4L686.9 457.7L687.9 457.1L688.0 458.6L689.0 459.0L690.8 458.9L692.5 457.0L692.7 458.7L694.7 459.6L695.8 460.7L694.6 462.8L693.8 464.2L692.2 465.3L690.4 466.2L688.7 467.2L685.7 468.9L683.4 469.7L682.0 470.3L680.6 470.4L680.1 469.1L679.8 467.2L678.7 465.2L677.3 463.0L676.4 461.6L675.7 459.4L674.5 457.7L673.1 455.3L672.5 454.9L672.7 453.5L672.0 455.3L670.8 454.3L670.4 452.9L670.1 451.6L671.9 451.5L672.7 449.9L673.5 447.4L673.6 445.9L672.2 445.4L670.3 446.1L668.5 445.3L667.1 446.0L665.7 445.3L664.5 443.6L664.4 442.1L664.5 441.4L664.7 440.8L664.3 440.4L662.4 440.5L662.2 441.5L661.3 441.0L661.3 442.4L662.4 443.9L661.5 444.5L661.5 445.7L660.2 445.3L659.8 443.6L658.7 441.9L658.1 440.9L658.2 439.3L657.3 438.4L654.9 437.1L654.0 435.8L653.3 434.8L652.7 435.2L652.8 434.3L651.5 434.8L651.7 436.5L653.1 438.4L654.9 439.2L657.3 441.3L655.9 440.9L655.4 442.1L656.0 442.7L654.9 443.9L654.6 443.7L654.9 442.1L654.0 441.3L653.2 440.5L651.5 439.4L649.8 437.9L649.5 436.6L648.2 436.0L647.0 436.8L646.1 437.7L644.7 437.4L643.7 437.1L642.9 437.8L642.9 438.5L643.0 439.2L642.1 439.8L640.8 440.3L639.7 442.1L640.0 443.1L639.3 444.4L637.9 445.4L635.9 445.4L634.8 446.3L634.1 445.7L633.1 444.9Z"/><path d="M472.1 392.5L475.8 395.2L478.6 397.2L481.4 399.3L479.5 402.9L478.6 403.3L476.3 400.9L473.5 398.8L472.1 401.5Z"/><path d="M634.5 446.5L635.1 446.4L637.3 447.1L639.1 446.6L640.9 445.7L642.8 445.3L646.5 445.1L649.3 444.7L650.3 445.1L649.9 446.5L649.4 448.5L650.7 449.4L652.3 449.8L654.3 450.4L655.4 451.6L657.7 452.6L658.7 451.9L658.8 450.3L660.2 449.8L661.6 450.3L663.3 451.1L665.7 451.6L667.9 451.6L668.9 451.3L670.1 451.6L670.4 452.9L670.4 453.5L671.3 455.1L672.2 457.2L673.1 459.2L673.3 460.2L674.5 461.8L674.8 464.2L675.9 465.2L676.9 467.7L678.3 468.6L680.1 470.4L680.4 471.5L681.1 472.4L682.9 472.2L685.7 471.7L687.8 471.1L687.6 472.5L686.6 474.8L684.8 478.1L682.9 480.0L681.1 481.4L679.2 483.0L678.1 484.6L677.0 486.0L676.4 487.9L676.8 489.8L677.8 492.2L678.0 496.0L676.9 497.9L674.3 499.4L672.7 501.4L673.1 503.3L673.1 505.4L670.8 506.9L670.6 509.0L669.4 511.1L668.2 513.1L666.1 514.9L664.0 516.1L660.5 516.4L658.7 517.0L657.2 516.3L657.0 513.8L655.9 511.1L654.2 508.5L653.5 504.4L651.7 499.9L651.0 497.4L652.6 494.1L652.4 491.0L651.5 487.9L650.7 486.0L648.9 484.2L648.2 483.0L648.9 481.8L648.9 480.0L649.1 478.6L647.9 478.1L646.5 478.2L645.1 477.3L644.2 476.4L641.9 476.4L640.0 477.0L638.1 477.8L636.3 477.4L633.0 478.2L631.1 477.2L629.3 475.8L627.9 474.3L627.4 473.2L626.0 472.0L624.4 470.5L624.3 469.6L623.7 468.4L624.6 467.2L624.9 465.2L624.6 463.7L624.1 462.3L625.1 459.7L626.5 457.2L627.9 455.4L629.3 454.5L630.7 453.5L630.9 451.9L632.1 449.3L633.7 448.5Z"/><path d="M571.9 361.0L578.4 356.7L579.4 352.1L584.0 341.4L593.4 337.3L602.7 330.6L612.0 329.0L619.5 336.6L628.8 343.3L623.2 352.1L623.2 359.6L621.3 366.2L622.3 372.1L620.9 375.7L619.0 380.7L619.5 383.8L619.5 388.1L616.7 389.0L617.6 390.9L615.7 393.2L611.1 394.7L608.3 398.4L605.5 400.0L602.7 401.8L601.7 405.0L600.3 408.0L599.9 411.3L598.2 412.1L595.2 410.4L593.4 407.0L592.0 403.9L590.6 399.5L589.9 396.0L592.4 392.2L589.2 389.5L588.9 385.6L587.8 380.7L585.9 372.5L581.2 369.8L576.6 370.2L573.8 365.3Z"/><path d="M554.0 468.6L556.0 469.4L557.9 469.9L558.4 470.1L559.8 471.5L560.0 472.4L560.9 473.1L562.0 474.2L562.7 474.6L564.4 475.3L565.4 475.4L565.8 474.1L567.2 474.5L567.3 475.6L567.9 474.3L566.3 473.4L564.6 474.0L563.5 473.7L562.6 472.9L562.0 472.0L562.2 470.1L562.4 468.1L561.2 467.4L559.8 467.3L557.9 467.5L557.1 467.3L557.6 464.7L556.8 465.4L555.7 465.4L555.6 467.1L554.4 467.1L554.0 467.9Z"/><path d="M560.7 461.4L562.6 460.2L565.4 460.2L568.2 461.8L570.8 463.0L567.5 463.3L567.2 462.6L566.3 461.7L563.5 460.8L561.6 461.3Z"/><path d="M570.6 464.8L572.4 463.3L574.7 463.4L576.2 464.6L574.7 465.0L573.1 465.4L571.1 465.1Z"/><path d="M566.9 464.8L568.8 465.0L568.6 465.3L567.2 465.4Z"/><path d="M577.3 464.7L578.7 464.8L578.6 465.2L577.3 465.2Z"/><path d="M573.5 471.2L574.7 470.8L576.3 472.3L578.4 472.4L579.8 472.7L582.2 472.3L583.1 473.1L584.0 474.3L583.1 475.8L582.8 476.7L583.4 477.4L582.2 478.4L580.3 478.6L579.8 480.0L580.8 480.2L578.9 481.6L577.7 481.2L577.5 481.2L576.7 479.7L577.2 479.1L576.7 478.1L577.0 476.5L575.2 476.6L573.9 475.8L572.5 475.4L572.5 474.5L571.9 473.7L572.4 472.0Z"/><path d="M584.0 474.3L585.4 475.8L586.8 476.8L589.6 476.9L591.5 477.9L591.9 478.4L591.0 480.1L589.2 480.2L587.3 480.5L585.1 481.1L584.2 480.4L584.0 477.4L583.4 477.4L582.8 476.7L583.1 475.8Z"/><path d="M565.1 485.5L564.1 486.5L564.4 487.9L565.5 489.1L566.8 491.0L568.0 493.6L568.9 495.3L570.0 496.9L572.4 498.1L574.3 499.7L575.2 498.9L575.1 496.9L575.8 495.8L575.7 494.2L575.1 492.5L574.1 492.6L574.1 491.2L572.6 491.7L571.7 491.1L571.0 489.3L571.7 487.9L572.0 487.2L574.7 486.3L574.8 486.2L574.0 485.8L572.0 484.5L571.0 483.2L569.7 482.4L569.6 483.7L568.6 484.6L566.9 485.5L566.6 486.6L565.7 486.4Z"/><path d="M575.2 498.9L575.8 500.4L576.1 501.8L576.6 504.2L578.1 503.1L579.8 503.6L581.6 503.6L581.9 501.8L584.0 500.7L585.7 501.5L586.4 499.4L585.5 497.7L583.8 497.7L583.6 495.3L581.4 494.5L579.1 493.1L579.1 491.5L577.9 491.6L575.9 492.6L575.1 492.5L575.7 494.2L575.8 495.8L575.1 496.9Z"/><path d="M581.6 503.6L581.9 501.8L584.0 500.7L585.7 501.5L586.0 503.5L587.9 503.7L588.2 505.3L589.3 505.4L589.1 507.0L587.8 508.8L585.3 508.8L586.3 506.8L584.0 505.4Z"/><path d="M574.3 499.7L574.5 502.3L574.2 505.4L573.3 510.1L573.3 512.7L573.1 515.5L571.9 518.9L571.4 521.9L571.1 525.6L570.5 529.4L569.7 532.8L570.0 537.1L571.0 540.1L572.8 542.1L573.8 542.2L574.7 540.8L576.2 539.9L575.2 539.6L572.5 537.8L572.4 534.9L573.2 530.7L573.0 527.5L573.5 523.1L573.9 519.5L574.7 516.1L574.4 513.8L575.0 511.1L576.3 508.5L576.2 505.9L576.6 504.2L576.1 501.8L575.8 500.4L575.2 498.9Z"/><path d="M576.0 543.8L574.7 544.3L572.8 543.0L573.8 541.9L574.4 540.5L576.0 540.4Z"/><path d="M583.1 538.5L585.9 538.4L585.4 539.6L583.3 539.6Z"/><path d="M686.0 493.6L687.1 496.9L686.2 498.9L685.3 502.3L684.0 506.3L682.2 506.9L681.1 505.9L680.4 503.3L681.4 501.2L681.1 498.9L682.5 497.3L684.3 496.3L685.3 494.8Z"/><path d="M762.2 483.0L765.0 483.0L766.0 485.4L768.3 483.9L771.6 484.7L774.8 485.8L776.2 487.4L777.9 488.2L777.3 489.1L778.6 490.7L780.4 492.0L779.5 492.1L777.2 491.2L774.8 489.5L773.4 490.3L773.0 490.9L771.6 490.8L769.7 489.8L768.8 490.1L768.6 488.8L769.4 488.4L768.8 487.4L766.4 486.4L764.1 486.0L763.9 484.9L764.8 484.4L763.2 484.2Z"/><path d="M741.7 480.6L742.6 480.7L743.8 480.0L745.4 479.3L747.3 477.6L749.0 475.8L749.8 476.7L751.2 477.4L749.9 478.4L750.0 480.2L751.0 481.4L749.6 481.8L749.6 483.2L748.5 484.2L748.3 485.8L746.9 486.1L745.4 485.4L744.1 485.4L742.8 484.9L742.6 483.7L741.7 482.5Z"/><path d="M728.9 477.1L731.0 477.4L732.1 478.8L733.8 480.2L735.2 481.4L736.6 482.3L737.5 484.0L738.9 485.1L738.7 487.7L737.6 487.7L735.4 486.0L734.0 484.4L732.6 482.3L731.4 480.4L730.0 478.8Z"/><path d="M738.2 488.7L739.6 487.9L741.2 488.5L743.4 488.3L745.1 488.8L746.8 489.6L746.7 490.4L744.0 490.1L741.2 489.6L739.3 489.2Z"/><path d="M751.8 482.4L752.1 481.5L753.8 481.4L756.5 480.8L756.2 481.9L753.4 481.8L752.2 483.1L753.4 483.1L754.9 483.0L753.8 484.0L753.4 484.6L754.3 485.6L754.6 486.8L753.5 486.6L752.9 485.1L752.2 485.1L752.3 487.4L751.5 487.4L751.4 485.6L750.9 484.9Z"/><path d="M755.2 492.0L756.6 490.7L758.5 490.2L758.0 490.7L756.2 491.9Z"/><path d="M747.8 490.1L749.2 490.1L751.0 490.2L752.9 490.2L754.8 490.1L754.6 490.5L752.0 490.6L749.2 490.7L747.8 490.5Z"/><path d="M759.0 480.4L759.9 480.9L759.6 481.8L759.9 483.0L759.1 482.8L759.1 481.4Z"/><path d="M752.4 464.7L754.0 464.8L754.1 466.7L753.4 468.6L755.7 469.3L755.7 470.4L753.8 469.3L752.5 469.1L752.0 467.2Z"/><path d="M753.8 475.8L755.2 474.2L757.1 473.2L758.0 475.3L757.1 476.9L755.7 475.9Z"/><path d="M753.8 471.2L754.9 471.5L757.1 470.7L756.6 472.7L755.2 473.4L754.3 472.9Z"/><path d="M749.4 474.4L751.5 472.4L751.3 471.7L750.1 473.1Z"/><path d="M762.1 448.5L763.6 446.9L766.4 446.7L767.8 444.7L769.2 444.7L770.4 442.4L770.6 440.7L771.8 439.9L772.5 442.1L771.6 443.9L771.4 446.3L770.8 447.2L769.5 447.7L767.8 447.9L766.7 449.1L766.0 447.9L763.6 448.3Z"/><path d="M770.6 439.7L771.1 437.5L772.3 434.7L773.9 436.2L775.8 437.1L774.4 437.9L773.6 439.0L771.6 438.5Z"/><path d="M761.3 449.1L762.7 448.9L763.0 450.2L762.2 451.6L761.6 451.5L761.3 450.2Z"/><path d="M763.6 448.8L765.5 448.3L765.2 449.2L764.1 449.9Z"/><path d="M772.5 421.7L773.4 423.8L773.7 427.5L774.8 429.7L773.4 432.5L773.9 433.6L772.5 433.9L772.5 431.1L772.7 426.8L772.3 423.3Z"/><path d="M752.9 458.0L753.7 458.4L752.9 461.3L752.1 460.2Z"/><path d="M741.7 463.2L743.5 463.4L742.6 464.9L741.4 464.2Z"/><path d="M714.6 473.2L715.8 474.3L716.3 475.8L715.2 476.7L714.5 475.8L714.5 474.1Z"/><path d="M688.0 386.7L689.9 382.3L691.8 377.4L694.1 372.8L699.7 368.6L703.9 366.6L702.5 370.2L696.9 373.9L694.1 378.1L692.2 383.8L693.6 387.6L690.4 387.6Z"/><path d="M728.6 357.2L729.6 350.4L733.3 345.8L738.0 353.1L734.2 359.6L730.5 361.0Z"/><path d="M767.8 372.1L772.5 370.2L778.1 372.8L773.4 374.6L768.8 375.0Z"/><path d="M683.9 349.3L688.5 347.0L694.1 345.2L697.8 347.6L694.1 351.0L686.6 352.1Z"/><path d="M806.5 386.2L807.9 385.3L807.9 387.0L807.0 387.3Z"/><path d="M651.7 443.9L654.6 443.7L654.1 445.4L652.6 444.9Z"/><path d="M647.7 440.4L649.0 440.3L649.0 442.5L647.9 442.7Z"/><path d="M662.0 446.8L664.4 447.2L663.3 447.5L662.0 447.2Z"/><path d="M670.1 447.4L672.2 446.7L671.5 447.6L670.3 447.9Z"/><path d="M689.8 470.4L690.8 470.5L690.2 470.7Z"/></g><g fill="#efefef"><path d="M667.1 440.2L669.4 439.9L671.3 439.0L672.7 439.0L674.5 440.0L676.9 440.3L678.7 439.7L678.7 438.4L677.3 437.1L675.5 435.8L674.5 434.9L675.9 433.9L676.7 432.4L675.0 432.8L672.8 433.4L673.1 434.7L674.1 434.8L672.9 435.3L671.4 436.0L670.4 434.7L671.3 433.7L669.7 433.2L668.6 433.3L667.7 434.8L666.8 436.5L666.1 438.0L666.3 439.7Z"/><path d="M683.9 435.2L685.7 433.2L687.6 432.8L689.4 433.2L689.4 434.8L687.6 435.8L686.9 435.8L688.0 437.5L689.2 438.4L689.0 439.7L690.2 440.5L689.4 442.1L690.2 443.0L690.3 444.7L688.5 445.3L686.9 444.7L685.7 443.6L686.0 441.2L684.8 439.0L684.3 437.8L683.6 436.1Z"/><path d="M694.6 433.2L696.9 433.0L696.9 435.2L695.5 436.8L694.4 435.8Z"/></g><g fill="none" stroke="#e6e1da" stroke-width="0.4" stroke-linejoin="round"><path d="M675.6 432.4L677.3 431.1L677.1 428.9L675.5 428.3L673.1 427.7L671.7 424.9L669.7 425.2L668.7 420.9L666.3 418.8L665.8 416.4L665.6 414.1L666.1 412.8"/><path d="M685.7 433.2L683.9 431.1L683.6 430.0L684.3 427.8L687.4 425.8L690.8 426.8L694.7 426.8L697.4 426.4L696.9 422.4L700.6 421.4L704.4 420.1L706.2 421.9L708.6 422.4L711.7 421.6L712.6 423.3L714.6 427.1L717.9 426.8L719.6 428.9L721.5 429.4"/><path d="M721.5 429.4L725.8 427.1L728.6 428.3L731.7 425.3L735.4 426.4L735.4 427.5L739.8 428.7L743.3 429.4L746.8 428.0L748.9 428.6"/><path d="M748.9 428.6L751.3 427.8L752.7 424.4L753.4 423.3L755.3 423.0L757.6 424.2L759.0 428.0L761.9 429.9L762.2 431.5L765.7 430.7L764.1 435.2L762.5 436.5L762.2 437.9L761.8 438.5"/><path d="M721.9 429.4L722.8 430.8L724.8 433.4L724.9 434.9L729.0 436.2L729.9 438.2L734.7 438.4L738.0 439.5L742.2 438.4L744.4 436.9L744.4 435.2L747.9 434.5L748.8 433.4L751.7 432.9L749.9 431.5L748.0 431.4L748.9 428.6"/><path d="M721.5 429.4L720.1 432.4L717.4 432.2L716.8 434.5L714.6 435.2L715.0 437.8L714.8 438.8"/><path d="M714.8 438.8L710.9 437.9L708.6 437.8L706.2 438.7L704.4 439.8L702.2 440.0L701.6 437.9L697.8 437.1L694.6 434.5L692.2 435.2L692.2 439.9L689.4 439.0"/><path d="M714.8 438.8L711.7 441.0L708.9 442.1L709.8 444.9L712.6 446.8L713.7 449.7L713.4 451.5L715.6 452.7L718.4 454.2L722.1 455.2L723.0 455.8L725.8 455.3L729.1 454.0L730.9 454.8L732.1 455.6L732.0 458.4L731.1 459.3L732.4 461.3L734.4 462.0L735.4 460.8L737.0 460.6L739.5 460.3L740.8 461.8"/><path d="M703.6 459.5L706.2 458.7L705.3 455.6L707.6 454.0L709.5 451.1L709.0 448.0L712.6 446.8"/><path d="M714.7 454.2L718.4 455.7L722.2 456.7L722.9 458.9L723.0 461.5"/><path d="M730.9 454.8L728.8 456.5L727.9 459.2L727.0 461.0L726.1 462.6"/><path d="M726.1 461.8L725.5 460.2L726.0 458.2L723.8 457.3L722.2 456.7"/><path d="M722.2 456.7L723.0 455.8"/><path d="M725.8 455.3L725.8 456.3L723.8 456.4L723.0 455.8"/><path d="M685.3 452.9L684.5 451.3L682.9 449.7L682.5 447.4L683.1 446.5L681.8 444.9L681.4 442.2L682.9 442.7L684.8 442.1L685.6 443.4"/><path d="M697.5 458.0L697.7 456.3L699.0 455.9L698.6 453.6L696.8 453.2L697.7 451.4L696.5 449.4L697.1 446.7L697.1 445.6L695.3 444.5L693.4 443.6L691.1 444.5L690.3 444.7"/><path d="M697.1 445.6L700.2 445.9L702.0 444.6L703.4 445.1L706.7 443.3L709.8 444.9"/><path d="M696.8 453.2L701.6 453.2L702.0 451.9L704.7 450.9L704.8 449.1L706.2 448.0L706.7 445.9L709.8 444.9"/><path d="M692.2 439.9L694.6 438.2L696.0 438.8L697.8 440.0L699.7 442.7L702.0 444.6"/><path d="M702.2 440.0L703.9 441.3L705.8 440.4L708.1 441.3L708.9 442.1"/><path d="M703.4 445.1L703.3 442.7L705.8 442.0L708.9 442.1"/><path d="M678.7 439.7L680.6 440.2L681.8 441.9L681.4 442.2"/><path d="M673.8 445.6L675.5 445.3L678.1 445.0L679.6 444.9L681.8 444.9"/><path d="M677.3 437.3L680.1 437.8L682.9 439.3L685.3 439.3"/><path d="M680.6 440.2L683.4 440.2L682.9 442.7"/><path d="M679.6 444.9L678.3 448.1L676.2 449.2L676.6 450.5L674.5 451.3L675.5 452.4L675.0 452.9L673.6 453.8L672.7 453.5"/><path d="M676.6 450.5L679.2 451.6L681.7 453.8L683.4 453.9L684.5 452.9L684.8 453.4"/><path d="M676.2 449.2L674.3 450.4L673.3 450.0L673.2 449.3L672.7 449.5"/><path d="M673.5 447.9L674.1 448.0L673.9 449.1L673.2 449.3"/><path d="M671.9 451.5L672.6 453.5"/><path d="M673.1 450.2L673.0 451.9L672.7 453.5"/><path d="M679.8 466.8L680.4 465.7L683.9 466.2L685.7 464.6L688.5 464.2L689.5 466.5"/><path d="M688.5 464.2L691.3 463.2L691.9 461.1L691.5 460.5L689.1 460.3L688.1 459.0"/><path d="M691.5 460.5L692.2 459.0L692.5 457.6"/><path d="M733.4 462.9L731.6 463.5L730.9 464.7L732.0 467.2L731.6 468.1L732.6 470.1L732.9 471.2L732.2 472.5"/><path d="M732.4 461.3L733.4 462.9L733.8 463.7L734.4 463.7L734.4 465.7L735.2 465.0L737.0 464.9L737.7 466.7L738.5 468.7"/><path d="M735.4 460.8L736.1 462.5L737.9 463.1L737.0 463.7L738.2 464.6L739.8 466.8L740.3 468.3L740.3 468.7"/><path d="M736.0 471.3L735.5 469.5L736.1 468.8L738.5 468.7L740.3 468.7L740.3 470.6L738.8 472.0L737.5 472.5"/><path d="M733.5 476.2L734.2 476.9L735.2 476.5"/><path d="M742.3 480.4L742.6 481.4L744.5 480.9L746.4 480.9L747.8 479.5L747.9 478.3L749.6 478.4"/><path d="M771.6 484.7L771.6 490.8"/><path d="M756.0 441.5L757.6 440.3L759.4 439.7L761.0 438.4L761.8 438.5"/><path d="M757.6 444.0L759.0 443.6L759.8 443.2"/><path d="M658.2 421.6L661.3 421.6L661.9 422.4L662.3 424.2L662.0 426.1L662.5 427.1L661.1 429.6"/><path d="M654.0 426.8L655.8 427.7L657.5 429.0L661.1 429.6"/><path d="M661.1 429.6L660.7 430.6L663.2 431.5L664.8 430.7L666.3 434.5L667.7 434.8"/><path d="M664.8 430.7L666.1 430.8L668.0 433.2L666.3 434.5"/><path d="M661.9 422.4L664.8 419.4L666.3 418.8"/><path d="M662.0 426.1L665.7 425.9L668.5 426.4L669.7 425.2"/><path d="M659.6 418.8L663.2 418.3L664.8 419.4"/><path d="M662.7 415.7L664.3 415.9L665.8 416.4"/><path d="M661.3 421.6L661.3 420.6L659.8 420.1"/><path d="M661.0 435.8L661.2 436.8L663.7 437.0L665.3 436.4L666.7 436.9"/><path d="M655.9 431.1L657.5 431.4L660.7 430.6"/><path d="M655.4 432.5L655.2 433.2L657.5 434.0L658.9 433.6L659.8 433.6L661.4 431.1"/><path d="M651.4 427.8L653.3 426.8"/><path d="M652.9 430.1L654.0 429.7L655.9 430.3L657.5 429.0"/><path d="M655.9 430.3L655.9 431.1"/><path d="M646.5 434.0L647.9 433.4L649.8 432.6L651.6 432.9L652.8 433.2L652.8 434.3"/><path d="M647.1 431.7L649.0 431.8"/><path d="M645.7 433.4L646.5 434.0"/><path d="M652.8 433.2L654.6 433.6L655.2 433.2"/><path d="M652.8 434.5L654.3 434.5L654.6 433.6"/><path d="M657.5 434.0L658.1 435.3L658.1 437.1L659.1 437.9L659.2 439.2L659.6 440.4L658.9 441.8"/><path d="M659.2 439.2L661.4 439.9L662.9 439.7L664.5 439.4L666.1 439.0"/><path d="M664.5 439.4L664.3 440.4"/><path d="M661.2 436.8L660.9 438.0L661.4 439.9"/><path d="M654.6 434.9L655.9 434.9L658.1 435.3"/><path d="M654.9 437.1L656.3 437.8L657.3 438.4"/><path d="M658.1 437.1L657.3 438.4"/><path d="M658.2 439.3L659.1 437.9"/><path d="M661.0 435.8L660.0 435.4L658.9 433.6"/><path d="M637.9 447.3L638.9 450.2L636.6 451.9L634.9 453.2L631.9 454.3L631.9 455.4"/><path d="M627.7 455.4L631.9 455.4L631.9 457.2L628.8 457.2L628.8 459.8L627.9 460.2L627.9 462.0L624.1 462.0"/><path d="M631.9 455.8L635.5 458.2L641.1 462.2L643.1 464.1L643.9 464.0L645.6 463.4L647.0 462.4L651.2 459.7"/><path d="M635.5 458.2L633.9 458.2L634.9 466.7L634.9 467.7L629.9 467.8L628.6 468.3"/><path d="M624.6 467.2L626.5 466.6L628.6 468.3"/><path d="M648.0 445.2L647.7 447.7L647.0 448.8L648.5 450.6L648.9 452.6L649.2 456.6L651.2 459.7"/><path d="M650.7 449.4L649.6 451.0L648.9 452.6"/><path d="M663.3 451.1L663.3 461.3"/><path d="M651.2 459.7L654.0 460.2L662.4 463.7L662.4 463.2L663.3 463.2L663.3 461.3"/><path d="M663.3 461.3L674.4 461.3"/><path d="M662.4 463.7L662.4 467.5L661.4 467.7L661.0 470.1L660.5 472.0L662.0 474.2"/><path d="M654.0 460.2L654.5 462.3L654.9 463.0L654.5 466.3L652.7 469.4"/><path d="M643.4 471.3L643.8 469.6L646.5 470.1L648.4 470.3L651.2 469.9L652.7 469.4"/><path d="M653.1 470.1L654.0 472.9L652.9 472.9L654.5 475.3"/><path d="M647.9 477.9L649.3 475.8L651.2 475.3L652.4 473.3L653.2 470.6"/><path d="M643.9 464.0L643.9 466.7L643.3 467.8L640.2 468.2"/><path d="M640.2 468.2L638.1 468.9L635.9 469.9L634.9 472.0L634.9 472.5L637.4 473.4L637.4 472.1L639.9 471.9L640.8 472.0L642.2 471.1L643.4 471.3"/><path d="M640.2 468.2L642.2 471.1"/><path d="M637.4 477.6L637.4 473.4"/><path d="M641.1 476.6L640.5 474.3L640.0 471.9"/><path d="M641.5 476.5L641.5 473.9L640.8 472.0"/><path d="M642.5 476.3L642.6 473.9L643.4 471.3"/><path d="M633.0 478.2L632.1 476.2L632.3 475.2L632.6 473.4L632.5 472.7L634.2 472.4L634.9 472.5"/><path d="M632.3 475.2L631.2 475.4L630.4 474.3L629.3 475.8"/><path d="M630.4 474.3L630.0 473.6L629.6 472.9L627.6 473.8"/><path d="M632.5 472.7L632.3 472.0L631.9 470.6L629.4 470.6L627.2 470.4L627.2 471.3L626.0 472.0"/><path d="M628.6 468.3L629.4 470.6"/><path d="M627.2 470.4L624.4 470.6"/><path d="M624.3 469.5L626.9 469.5L626.9 469.9L624.3 470.0"/><path d="M676.0 465.2L674.5 466.2L674.1 468.8L673.7 470.4L671.8 473.4L670.8 474.8"/><path d="M662.4 474.2L664.7 473.3L666.9 473.5L668.7 473.1L670.2 471.3L671.0 472.3L671.8 473.4"/><path d="M680.4 471.5L679.9 472.1L681.1 473.9L683.9 474.8L684.8 474.8L682.0 477.6L679.2 478.4L678.3 478.7L676.9 479.1L673.6 478.2L672.7 477.3L670.8 474.8"/><path d="M674.1 468.8L675.9 468.6L678.1 469.0L679.6 470.5L680.2 470.4"/><path d="M678.3 478.7L678.3 483.1L678.8 483.9"/><path d="M676.6 486.7L675.1 485.1L671.7 483.2L671.7 481.8L672.7 480.6L671.7 478.4L672.7 477.3"/><path d="M671.7 483.2L668.5 483.2L667.6 483.6"/><path d="M668.8 479.0L671.7 478.4"/><path d="M685.7 471.7L685.7 473.9L684.8 474.8"/><path d="M657.4 479.0L657.4 478.2L660.9 478.5L663.3 477.4L665.6 477.5L668.8 479.0L669.1 480.2L667.6 483.6L667.1 484.9L667.4 486.5L667.5 488.4L668.7 490.1L666.5 490.9L666.8 492.3L666.5 493.4L667.8 493.8L667.8 494.9L665.4 493.4L662.4 492.5"/><path d="M665.6 477.5L662.4 474.2"/><path d="M667.1 484.9L668.7 484.5L668.5 483.2"/><path d="M667.4 486.5L668.7 485.4L668.7 484.5"/><path d="M651.5 487.9L655.5 487.8L655.9 489.1L658.1 489.7L660.3 489.1L660.4 491.3L660.8 492.8L662.4 492.5L662.4 494.5L660.5 494.5L660.5 497.6L661.8 499.0"/><path d="M651.0 498.7L653.2 498.8L657.2 498.8L660.0 499.3L661.8 499.0L663.6 499.2"/><path d="M652.1 486.6L653.4 486.9L654.8 486.0L656.6 483.2L656.6 481.6L657.4 479.0"/><path d="M649.1 480.2L652.4 480.2L653.5 480.2L655.1 480.2L655.5 479.0L657.4 479.0"/><path d="M650.4 485.9L651.1 485.5L653.4 484.1L653.5 482.9L652.4 480.2"/><path d="M649.0 481.4L650.5 481.4L650.5 480.2"/><path d="M654.5 475.3L657.7 473.9L661.4 472.0"/><path d="M654.5 475.3L653.5 477.6L655.1 480.2"/><path d="M677.7 492.1L675.5 492.9L672.3 493.2L672.6 491.3L671.7 491.2L670.7 491.1L668.7 490.1"/><path d="M668.4 497.0L670.7 498.1L670.5 500.3L670.7 501.5L669.2 503.8"/><path d="M663.6 499.2L665.2 499.4L667.0 497.3L668.4 497.0L670.8 495.5L670.7 491.1"/><path d="M670.8 495.5L672.2 496.0L673.4 497.4L672.9 498.5L672.0 497.1L672.3 493.2"/><path d="M658.7 506.2L658.7 503.3L659.6 503.3L659.6 499.7L661.8 499.0"/><path d="M663.6 499.2L664.4 501.0L665.8 501.8L667.4 503.6"/><path d="M669.8 507.3L668.9 507.4L668.8 508.7L669.9 508.8"/><path d="M554.0 468.6L556.8 468.7L556.8 467.3L557.6 467.5"/><path d="M556.8 468.7L558.2 469.7"/><path d="M556.8 465.4L556.8 467.3"/><path d="M558.2 470.1L559.1 469.3L560.7 468.5L562.4 468.1"/><path d="M560.0 471.9L561.6 472.2L561.9 472.1"/><path d="M562.7 474.6L562.9 473.4"/></g><g fill="#c0622e" stroke="#f0dccd" stroke-width="0.35" stroke-linejoin="round"><path d="M508.4 390.6L508.4 411.3L509.8 411.9L511.7 413.7L513.8 412.6L515.4 414.3L516.8 417.3L518.7 419.0L518.4 420.9L517.3 420.1L515.9 418.6L514.5 416.9L513.1 415.2L511.7 414.5L509.4 412.5L505.6 411.9L503.8 410.4L501.9 411.9L500.0 413.2L498.2 413.7L498.7 410.4L497.3 412.8L496.3 415.0L494.0 417.3L492.1 419.0L489.8 420.3L487.9 420.9L486.2 421.4L488.9 419.3L490.7 418.1L492.6 416.2L493.2 414.3L491.7 414.5L489.0 414.3L488.9 412.3L486.5 411.3L485.8 409.6L485.1 408.0L486.2 406.0L489.8 405.0L489.8 402.9L487.9 402.6L484.8 402.6L483.3 400.4L486.5 398.4L487.2 399.1L488.9 398.1L487.0 395.7L485.1 394.0L484.9 392.5L487.9 390.6L489.8 388.7L492.6 387.3L493.9 385.9L498.2 387.3L501.9 388.4L504.7 389.5Z"/><path d="M508.4 390.6L510.3 390.6L513.1 392.5L515.9 390.9L519.6 389.5L521.5 389.0L523.8 391.1L527.1 390.1L530.8 392.2L533.6 394.0L532.7 395.2L537.4 395.0L539.2 397.2L539.7 394.2L542.0 393.5L545.3 395.5L548.6 395.2L549.5 393.5L550.6 393.2L550.4 390.9L551.8 384.1L553.4 387.9L554.6 390.9L555.6 393.7L557.9 395.2L558.8 392.7L560.2 390.3L564.0 391.7L564.1 396.0L562.6 399.1L560.7 398.8L559.0 400.7L558.4 402.9L556.0 404.4L554.2 406.4L553.2 408.0L552.3 410.4L551.6 411.9L551.6 414.3L553.2 414.3L553.7 417.3L556.0 417.3L557.9 418.1L560.7 419.8L563.0 420.3L563.5 423.8L564.4 425.3L565.5 426.5L566.5 424.5L566.3 421.4L568.4 418.1L567.7 415.5L566.9 413.7L567.9 411.9L567.2 407.2L571.0 407.4L573.8 409.4L575.1 410.0L575.2 413.7L577.0 415.0L578.6 412.8L579.8 411.1L581.7 414.6L583.1 419.0L585.0 420.6L586.4 422.2L587.8 424.5L588.0 425.9L585.4 426.4L584.0 427.8L580.3 427.8L577.7 428.3L575.6 430.1L573.8 432.8L575.2 431.7L577.5 429.7L579.8 429.4L579.9 430.7L578.4 431.1L579.4 432.5L579.6 433.6L580.8 433.9L582.6 434.3L584.0 432.8L584.0 434.1L582.8 434.8L580.8 435.7L578.8 437.0L578.2 435.8L579.5 434.7L577.5 435.1L576.7 432.5L575.4 431.9L573.9 434.8L570.2 435.2L568.7 436.4L566.3 437.3L566.3 437.9L563.0 439.0L562.6 438.7L563.1 437.8L563.0 434.8L561.6 433.3L557.5 430.7L556.4 431.1L551.2 429.7L525.2 429.7L525.1 429.3L523.4 427.8L521.0 426.8L520.6 424.5L518.7 421.7L518.4 420.9L518.7 419.0L516.8 417.3L515.4 414.3L513.8 412.6L511.7 413.7L509.8 411.9L508.4 411.3Z"/><path d="M584.7 431.4L587.8 432.8L590.6 432.9L590.8 431.7L589.9 430.3L588.2 428.6L587.8 426.1L586.4 427.4Z"/><path d="M524.8 430.6L522.9 429.9L520.3 427.4L521.5 427.1L523.4 428.3Z"/><path d="M582.6 398.1L580.3 405.0L579.4 408.2L576.6 407.0L573.3 404.8L571.0 403.1L567.7 403.3L567.2 401.8L571.0 400.7L571.4 398.4L572.4 396.0L571.0 394.0L568.2 390.9L566.8 389.5L563.5 389.5L560.7 389.5L557.0 386.7L556.0 383.8L556.5 378.4L560.7 378.1L564.4 378.4L568.2 381.6L571.0 384.7L573.8 386.7L576.6 389.0L577.5 392.2L580.3 395.5Z"/><path d="M530.8 388.1L532.7 391.4L534.6 393.5L538.3 393.0L542.0 392.2L544.8 390.9L545.8 388.1L542.5 386.7L542.0 381.3L539.2 380.0L536.4 381.3L533.6 379.7L529.9 382.3L529.0 385.3Z"/><path d="M523.4 383.8L524.8 386.2L527.1 385.3L529.0 382.0L531.8 379.1L529.9 376.4L526.6 375.7L523.8 378.1Z"/><path d="M582.6 337.3L580.3 343.3L577.5 347.6L573.8 353.7L569.1 355.7L570.0 360.5L567.2 367.0L564.4 369.0L559.8 368.6L557.0 367.4L557.9 361.9L558.8 354.7L559.8 349.3L555.1 343.3L557.9 338.7L565.4 332.9L574.7 332.2Z"/><path d="M565.4 371.7L563.5 375.7L557.9 375.3L554.2 374.6L554.2 369.4L557.0 369.0L560.7 371.3Z"/><path d="M558.4 356.2L555.1 360.5L551.4 354.7L552.3 347.6L556.0 345.2L558.4 351.0Z"/><path d="M541.1 373.9L537.4 374.6L533.6 375.0L530.8 372.1L532.7 368.6L537.4 369.4L541.1 370.9Z"/><path d="M549.5 383.8L547.2 385.9L544.8 382.3L545.8 378.1L548.6 378.4Z"/><path d="M556.0 378.1L553.2 383.8L550.9 383.2L550.7 378.1L553.2 377.1Z"/><path d="M564.9 403.9L562.6 406.0L558.8 404.6L560.7 400.4L563.5 401.8Z"/><path d="M548.6 373.9L544.8 371.7L546.7 367.8L549.5 370.2Z"/><path d="M531.8 369.0L529.0 370.9L525.2 369.4L528.0 364.9L531.3 365.3Z"/><path d="M550.4 392.2L547.6 392.5L547.2 390.6L549.5 389.5Z"/><path d="M525.2 429.7L523.7 430.6L524.3 433.6L524.1 437.8L524.0 441.0L525.7 444.2L527.5 448.0L529.4 448.5L530.7 450.2L533.0 450.0L536.4 451.5L539.0 451.5L539.0 451.0L540.6 451.0L542.5 453.4L543.9 454.0L544.5 453.2L545.8 453.4L547.2 455.6L549.3 457.3L549.2 455.3L551.4 453.7L552.5 453.3L554.6 453.7L556.6 454.0L557.0 452.7L558.4 452.6L560.2 453.2L561.6 452.9L562.7 455.1L563.7 457.2L564.4 458.1L565.2 457.7L565.4 456.1L564.1 452.6L564.6 450.8L566.3 449.1L567.4 448.5L569.1 447.4L569.4 446.3L568.9 445.1L569.8 443.6L571.0 441.8L571.0 440.8L573.0 439.9L574.7 439.4L574.0 438.0L575.6 436.2L577.5 435.4L577.5 435.1L576.7 432.5L575.4 431.9L573.9 434.8L570.2 435.2L568.7 436.4L566.3 437.3L566.3 437.9L563.0 439.0L562.6 438.7L563.1 437.8L563.0 434.8L561.6 433.3L557.5 430.7L556.4 431.1L551.2 429.7L525.2 429.7Z"/><path d="M530.7 450.2L531.8 452.4L532.9 454.5L533.5 455.9L535.0 457.7L535.5 458.7L537.4 460.3L537.8 459.8L536.8 458.4L536.0 456.6L534.8 455.1L533.6 452.9L532.9 451.0L534.6 451.6L535.0 453.5L536.4 455.1L537.8 456.6L539.2 458.2L540.6 459.9L541.6 461.8L541.6 463.1L542.7 464.1L544.8 465.2L546.7 466.2L549.0 467.3L551.4 467.1L552.8 467.9L554.0 468.6L554.0 467.9L554.4 467.1L555.6 467.1L555.7 465.4L556.8 465.4L557.6 464.7L558.4 463.7L559.0 462.1L557.9 461.7L555.7 462.3L555.4 463.7L554.4 464.6L552.3 464.9L550.6 464.4L550.0 463.4L549.1 461.8L548.8 460.4L548.9 458.7L549.3 457.3L547.2 455.6L545.8 453.4L544.5 453.2L543.9 454.0L542.5 453.4L540.6 451.0L539.0 451.0L539.0 451.5L536.4 451.5L533.0 450.0Z"/><path d="M567.9 474.3L568.8 473.9L569.6 472.4L570.2 472.0L571.9 471.7L573.1 470.6L573.5 471.2L572.4 472.0L571.9 473.7L572.5 474.5L572.5 475.4L573.9 475.8L575.2 476.6L577.0 476.5L576.7 478.1L577.2 479.1L576.7 479.7L577.5 481.2L574.9 480.7L575.5 481.7L574.7 481.8L575.2 483.5L574.8 486.2L574.0 485.8L572.0 484.5L571.0 483.2L569.7 482.4L568.8 481.9L567.7 481.6L566.5 481.0L566.8 480.0L567.7 478.8L567.9 477.2L567.7 476.0L567.3 475.6Z"/><path d="M566.5 481.0L565.4 481.6L564.9 482.8L564.4 483.7L565.1 484.7L565.1 485.5L565.7 486.4L566.6 486.6L566.9 485.5L568.6 484.6L569.6 483.7L569.7 482.4L568.8 481.9L567.7 481.6Z"/><path d="M591.9 478.4L593.4 480.7L593.4 482.3L595.2 483.0L598.5 484.6L601.3 485.0L604.1 485.8L605.5 486.8L607.1 487.3L607.5 489.3L607.2 491.2L605.5 492.8L604.1 494.5L603.6 496.5L603.4 498.9L602.7 501.4L601.7 503.3L599.7 504.4L598.0 505.0L596.6 505.6L594.7 507.2L594.7 509.0L593.8 510.8L592.6 512.7L591.3 514.1L590.2 515.7L589.6 513.7L588.1 512.6L586.3 511.9L587.8 510.0L589.8 508.7L589.1 507.0L589.3 505.4L588.2 505.3L587.9 503.7L586.0 503.5L585.7 501.5L586.4 499.4L585.5 497.7L583.8 497.7L583.6 495.3L581.4 494.5L579.1 493.1L579.1 491.5L577.9 491.6L575.9 492.6L575.1 492.5L574.1 492.6L574.1 491.2L572.6 491.7L571.7 491.1L571.0 489.3L571.7 487.9L572.0 487.2L574.7 486.3L574.8 486.2L575.2 483.5L574.7 481.8L575.5 481.7L574.9 480.7L577.5 481.2L577.7 481.2L578.9 481.6L580.8 480.2L579.8 480.0L580.3 478.6L582.2 478.4L583.4 477.4L584.0 477.4L584.2 480.4L585.1 481.1L587.3 480.5L589.2 480.2L591.0 480.1Z"/><path d="M576.6 504.2L576.2 505.9L576.3 508.5L575.0 511.1L574.4 513.8L574.7 516.1L573.9 519.5L573.5 523.1L573.0 527.5L573.2 530.7L572.4 534.9L572.5 537.8L575.2 539.6L576.2 539.9L575.6 537.1L576.9 534.9L578.6 532.8L577.0 530.7L578.9 529.4L579.4 526.8L580.0 526.2L579.4 524.3L581.7 524.1L582.0 521.9L585.4 521.3L587.1 518.9L586.5 517.8L585.5 516.6L585.5 516.1L585.7 514.9L585.9 513.3L586.3 511.9L587.8 510.0L589.8 508.7L589.1 507.0L587.8 508.8L585.3 508.8L586.3 506.8L584.0 505.4L581.6 503.6L579.8 503.6L578.1 503.1Z"/><path d="M576.0 540.4L579.2 543.5L578.0 544.2L576.0 543.8Z"/><path d="M586.3 511.9L588.1 512.6L589.6 513.7L590.2 515.7L588.8 517.1L587.6 517.1L585.5 516.1L585.7 514.9L585.9 513.3Z"/><path d="M617.1 400.7L619.0 398.6L621.3 399.5L625.1 398.4L626.5 400.7L627.3 401.8L626.0 403.3L622.7 405.2L619.5 404.4L618.8 402.2Z"/><path d="M650.4 413.6L649.8 413.4L648.9 414.1L647.5 415.3L646.5 415.5L645.2 414.3L644.8 411.9L644.7 409.6L644.9 407.7L646.5 406.0L648.4 404.6L649.8 402.9L651.2 400.4L652.1 397.2L653.5 394.7L654.9 393.0L656.8 390.6L659.1 389.3L661.9 387.3L664.3 386.4L666.6 386.7L668.9 388.7L668.0 390.3L667.1 391.7L666.0 389.3L664.3 389.8L664.1 392.2L661.9 393.0L660.1 391.4L659.2 391.9L658.7 393.7L657.0 393.5L655.4 396.0L654.4 399.1L653.5 401.1L652.8 402.9L651.4 404.8L651.4 408.6L651.9 409.4L651.5 411.5L651.0 412.3Z"/><path d="M650.4 413.6L650.5 415.0L651.2 416.6L651.8 418.6L652.1 419.9L653.3 419.8L653.7 418.6L654.9 418.6L655.5 416.4L655.7 414.5L657.3 413.2L657.5 411.5L656.1 410.6L656.0 408.0L656.8 406.4L658.7 404.6L660.0 402.6L660.1 400.9L662.6 400.0L662.1 397.7L661.9 395.0L660.3 393.2L659.2 391.9L658.7 393.7L657.0 393.5L655.4 396.0L654.4 399.1L653.5 401.1L652.8 402.9L651.4 404.8L651.4 408.6L651.9 409.4L651.5 411.5L651.0 412.3Z"/><path d="M662.6 400.0L663.7 401.8L663.0 403.5L661.0 405.6L659.9 407.4L660.1 410.0L660.5 411.1L661.5 412.1L663.3 411.5L665.9 411.0L667.5 409.0L669.4 406.2L668.0 404.4L668.5 402.2L667.7 399.5L667.1 397.4L668.0 395.5L666.7 392.5L667.1 391.7L666.0 389.3L664.3 389.8L664.1 392.2L661.9 393.0L660.1 391.4L659.2 391.9L660.3 393.2L661.9 395.0L662.1 397.7Z"/><path d="M648.0 420.6L647.6 419.0L647.7 417.3L649.8 416.0L649.6 417.9L649.3 419.3L648.9 420.6L648.8 420.9Z"/><path d="M650.3 419.4L651.7 419.0L651.7 420.1L651.0 420.8L650.3 420.1Z"/><path d="M634.7 428.1L636.7 427.8L639.1 427.2L641.3 426.5L640.5 426.1L641.6 424.4L640.3 423.8L639.9 422.7L638.6 420.6L638.1 419.1L636.9 419.0L638.1 416.2L636.7 416.0L637.2 414.5L635.3 414.5L634.7 416.4L634.2 417.9L635.1 419.9L635.5 420.9L637.0 420.9L637.2 422.2L637.1 423.3L635.8 423.3L636.0 424.9L635.1 425.6L636.9 426.2L636.0 426.8Z"/><path d="M630.7 425.9L632.1 425.9L634.1 425.0L634.4 423.3L634.9 421.6L634.2 420.3L632.3 420.3L632.1 421.6L630.7 421.9L630.9 423.3L631.1 424.5L630.4 425.3Z"/><path d="M638.3 437.3L638.9 435.7L638.9 433.9L637.9 432.2L635.7 431.1L635.6 430.4L637.2 430.0L638.5 430.1L638.3 428.7L639.0 429.3L640.2 428.9L641.5 428.0L641.5 427.0L642.3 426.7L642.8 427.1L643.9 428.3L644.6 428.6L645.4 429.0L646.0 429.0L647.7 429.7L647.1 431.7L645.7 433.4L646.5 434.0L646.3 435.1L647.1 436.4L647.0 436.8L646.1 437.7L644.7 437.4L643.7 437.1L642.9 437.8L642.9 438.5L641.6 438.4L640.0 438.2Z"/><path d="M648.0 438.8L648.8 437.8L648.9 439.0L648.6 439.8L648.1 439.5Z"/><path d="M638.3 437.3L636.5 437.1L634.6 437.0L632.5 436.9L631.4 437.7L631.8 439.2L632.3 439.0L633.9 439.2L634.2 439.7L633.6 440.9L633.5 441.9L633.0 442.0L633.5 443.0L633.2 443.9L633.1 444.9L634.1 445.7L634.8 446.3L635.9 445.4L637.9 445.4L639.3 444.4L640.0 443.1L639.7 442.1L640.8 440.3L642.1 439.8L643.0 439.2L642.9 438.5L641.6 438.4L640.0 438.2Z"/><path d="M631.8 439.2L631.8 440.3L631.1 443.0L631.8 443.4L631.7 445.1L633.1 444.9L633.2 443.9L633.5 443.0L633.0 442.0L633.5 441.9L633.6 440.9L634.2 439.7L633.9 439.2L632.3 439.0Z"/><path d="M643.2 426.2L643.7 425.3L644.4 423.8L645.6 423.2L646.7 423.3L646.5 424.4L646.3 425.5L645.6 425.6L645.7 427.1L645.3 427.1L644.7 426.2L644.0 426.2Z"/><path d="M642.3 426.7L643.2 426.2L644.0 426.2L644.7 426.2L645.3 427.1L645.7 427.1L645.9 427.8L645.4 429.0L644.6 428.6L643.9 428.3L642.8 427.1Z"/><path d="M646.7 423.3L647.5 422.8L648.0 422.2L648.0 420.6L648.8 420.9L649.3 421.4L650.3 422.2L651.2 421.9L652.6 421.6L653.2 422.4L653.6 424.4L653.7 426.1L654.0 426.8L653.3 426.8L651.4 427.8L651.7 428.6L652.9 430.1L652.1 431.7L651.2 431.7L649.8 431.9L649.0 431.8L647.1 431.7L647.7 429.7L646.0 429.0L645.4 429.0L645.9 427.8L645.7 427.1L645.6 425.6L646.3 425.5L646.5 424.4Z"/><path d="M649.0 431.8L649.8 431.9L651.2 431.7L652.1 431.7L652.9 430.1L654.0 429.7L655.9 430.3L655.4 432.5L653.5 433.2L651.6 432.9L649.8 432.6Z"/><path d="M655.4 510.2L656.1 512.2L657.0 513.8L657.2 516.3L658.7 517.0L660.5 516.4L664.0 516.1L666.1 514.9L668.2 513.1L669.4 511.1L670.6 509.0L670.7 508.3L669.9 508.3L669.8 506.9L669.4 504.9L669.2 503.8L667.4 503.6L665.2 505.0L664.1 506.2L663.6 507.1L661.5 506.7L660.1 508.3L659.3 508.3L658.7 506.2L658.7 510.0L657.7 510.5L656.2 510.3Z"/><path d="M773.0 492.3L774.1 495.8L775.6 496.5L776.2 499.9L778.6 501.4L780.6 503.9L782.7 506.7L783.3 510.1L782.3 514.2L781.1 516.0L780.0 519.7L778.1 520.6L776.6 522.0L774.8 520.9L773.9 521.6L771.1 520.7L770.2 518.3L768.9 517.0L768.4 514.9L767.4 517.2L766.4 517.0L765.0 514.7L762.7 513.3L760.4 513.5L757.6 514.2L755.5 516.0L752.0 516.0L750.0 517.3L747.4 516.5L747.9 513.8L747.2 511.1L745.9 507.4L746.2 503.9L748.9 501.9L751.0 501.4L753.4 500.4L754.1 498.4L755.4 497.7L756.6 496.3L758.2 495.5L759.9 496.4L761.0 496.3L761.5 494.3L763.6 492.9L766.4 493.6L767.6 493.8L766.7 496.0L767.8 497.2L769.7 498.7L771.4 498.9L772.0 495.5L772.2 494.1Z"/><path d="M775.0 523.9L778.3 524.2L778.4 525.8L777.4 527.5L776.2 527.5L775.5 525.8Z"/><path d="M801.1 516.5L803.1 519.3L804.0 519.2L804.2 520.2L806.4 520.2L805.9 522.1L805.0 523.7L803.6 525.1L803.1 524.7L803.3 523.1L802.2 522.2L803.0 520.9L802.7 518.9L801.4 517.2Z"/><path d="M801.1 523.7L802.6 524.6L802.3 525.6L801.2 527.2L801.4 528.0L799.8 528.5L799.4 530.6L798.1 531.6L797.0 531.6L795.3 530.7L796.3 529.2L797.2 528.1L799.1 526.7L800.0 525.3L800.7 524.1Z"/><path d="M494.5 463.1L495.4 463.5L494.8 464.2L494.5 463.6Z"/></g><path d="M665.2 511.2L666.3 510.3L667.4 511.0L667.2 512.0L666.1 512.3Z" fill="#7d7466"/></svg>
<svg style="left:0;top:0" width="1200" height="697" viewBox="0 0 1200 697"><polygon points="486.40,486.30 485.25,486.96 486.14,487.94 484.84,488.21 485.39,489.42 484.07,489.27 484.22,490.59 483.01,490.04 482.74,491.34 481.76,490.45 481.10,491.60 480.44,490.45 479.46,491.34 479.19,490.04 477.98,490.59 478.13,489.27 476.81,489.42 477.36,488.21 476.06,487.94 476.95,486.96 475.80,486.30 476.95,485.64 476.06,484.66 477.36,484.39 476.81,483.18 478.13,483.33 477.98,482.01 479.19,482.56 479.46,481.26 480.44,482.15 481.10,481.00 481.76,482.15 482.74,481.26 483.01,482.56 484.22,482.01 484.07,483.33 485.39,483.18 484.84,484.39 486.14,484.66 485.25,485.64" fill="#c0622e"/></svg>
<span class="t" style="left:475.57px;top:497.02px;font:normal 700 10px/1 'Liberation Serif', serif;color:#6b4636;transform:scaleX(0.9217);transform-origin:0 0;">List of countries</span>
<span class="t" style="left:475.80px;top:509.02px;font:normal 700 10px/1 'Liberation Serif', serif;color:#6b4636;transform:scaleX(0.9333);transform-origin:0 0;">where same sex</span>
<span class="t" style="left:475.57px;top:521.02px;font:normal 700 10px/1 'Liberation Serif', serif;color:#6b4636;transform:scaleX(0.9088);transform-origin:0 0;">marriage is legal</span>
<span class="t" style="left:469.80px;top:558.19px;font:normal 400 43px/1 'Liberation Serif', serif;color:#1d2820;transform:scaleX(1.3987);transform-origin:0 0;-webkit-text-stroke:0.5px #1d2820;">20</span>
<span class="t" style="left:660.41px;top:555.77px;font:normal 400 55.2px/1 'Liberation Serif', serif;color:#1d2820;transform:scaleX(1.0112);transform-origin:0 0;-webkit-text-stroke:0.9px #1d2820;">7</span>
<span class="t" style="left:535.58px;top:568.84px;font:normal 400 8.1px/1 'Liberation Sans', sans-serif;color:#262626;transform:scaleX(0.8848);transform-origin:0 0;-webkit-text-stroke:0.22px #262626;">Total countries that have</span>
<span class="t" style="left:535.37px;top:578.54px;font:normal 400 8.1px/1 'Liberation Sans', sans-serif;color:#262626;transform:scaleX(0.8654);transform-origin:0 0;-webkit-text-stroke:0.22px #262626;">legalized same-sex marriage</span>
<span class="t" style="left:535.35px;top:587.94px;font:normal 400 8.1px/1 'Liberation Sans', sans-serif;color:#262626;transform:scaleX(0.9086);transform-origin:0 0;-webkit-text-stroke:0.22px #262626;">nationally through legislation</span>
<span class="t" style="left:696.78px;top:568.84px;font:normal 400 8.1px/1 'Liberation Sans', sans-serif;color:#262626;transform:scaleX(0.8767);transform-origin:0 0;-webkit-text-stroke:0.22px #262626;">Total countries that have legalized</span>
<span class="t" style="left:696.78px;top:578.54px;font:normal 400 8.1px/1 'Liberation Sans', sans-serif;color:#262626;transform:scaleX(0.8720);transform-origin:0 0;-webkit-text-stroke:0.22px #262626;">same-sex marriage nationally</span>
<span class="t" style="left:697.00px;top:587.94px;font:normal 400 8.1px/1 'Liberation Sans', sans-serif;color:#262626;transform:scaleX(0.8814);transform-origin:0 0;-webkit-text-stroke:0.22px #262626;">through court decisions</span>
<span class="t" style="left:589.70px;top:643.81px;font:italic 700 10.5px/1 'Liberation Serif', serif;color:#efe8dc;transform:scaleX(0.9083);transform-origin:0 0;-webkit-text-stroke:0.22px #efe8dc;">Made with</span>
<span class="t" style="left:655.00px;top:640.26px;font:normal 400 16px/1 'Liberation Sans', sans-serif;color:#ffffff;transform:scaleX(1.0073);transform-origin:0 0;-webkit-text-stroke:0.22px #ffffff;">visme</span>
<svg style="left:635px;top:642px" width="18" height="13" viewBox="0 0 18 13"><path d="M0.6 7 Q3 1.4 8 1.6 L9.6 6.2 Q4 5.4 2 9 Z" fill="#29a9e0"/><path d="M8 1.6 L12.6 0.6 L12.2 6 L9.6 6.2 Z" fill="#f4d21f"/><path d="M12.6 2.6 L16.4 3.6 L13.6 6.6 L12.2 6 Z" fill="#3aa655"/><path d="M13.6 6.6 L16.6 6.4 L14.4 8.6 Z" fill="#e8433a"/><circle cx="8" cy="9.6" r="2.4" fill="#f2f2f2"/></svg>
<div class="a" style="left:448.3px;top:110.8px;width:391px;height:514px;border:2px solid #2b8df2"></div>
<div class="a" style="left:631.7px;top:612.2px;width:24px;height:24px;border-radius:12px;background:#fdfdff;border:1px solid #e4e6ee;box-shadow:0 1px 3px rgba(0,0,0,.15)"></div>
<svg style="left:631.7px;top:612.2px" width="24" height="24" viewBox="0 0 24 24"><g fill="none" stroke="#7e80ac" stroke-width="1.2" stroke-linecap="round" stroke-linejoin="round"><path d="M9.2 8.2 L12 5.4 L14.8 8.2 M9.2 15.8 L12 18.6 L14.8 15.8"/></g><circle cx="12" cy="12" r="1.3" fill="#7e80ac"/></svg>
<div class="a" style="left:855.8px;top:111px;width:35px;height:228.5px;border-radius:17.5px;background:#fff;box-shadow:0 1px 4px rgba(0,0,0,.10)"></div>
<div class="a" style="left:855.8px;top:302px;width:35px;height:1px;background:#e3eaf2"></div>
<div class="a" style="left:756px;top:645px;width:160px;height:33px;border-radius:16.5px;background:rgba(255,255,255,.32);box-shadow:0 2px 6px rgba(0,0,0,.16)"></div>
<div class="a" style="left:767.6px;top:661.2px;width:100.6px;height:1px;background:#8a8a8a"></div>
<div class="a" style="left:767.4px;top:660.6px;width:9px;height:2px;background:#2b8df2"></div>
<div class="a" style="left:772.2px;top:656.2px;width:10.8px;height:10.8px;border-radius:6px;background:#2b8df2"></div>
<div class="a" style="left:782.3px;top:658px;width:7.4px;height:7.4px;border-radius:4px;background:#6c6c6c"></div>
<div class="a" style="left:784.3px;top:660px;width:3.4px;height:3.4px;border-radius:2px;background:#d4d4d4"></div>
<span class="t" style="left:883.98px;top:654.80px;font:normal 700 12.4px/1 'Liberation Sans', sans-serif;color:#111;transform:scaleX(0.8333);transform-origin:0 0;-webkit-text-stroke:0.22px #111;">60%</span>
<div class="a" style="left:929px;top:643.4px;width:36px;height:36px;border-radius:18px;background:#a9c9ee;box-shadow:0 0 3px rgba(90,150,220,.6)"></div>
<div class="a" style="left:931px;top:645.4px;width:32px;height:32px;border-radius:16px;background:#2f4356"></div>
<span class="t" style="left:941.19px;top:652.32px;font:normal 700 19px/1 'Liberation Sans', sans-serif;color:#ffffff;transform:scaleX(1.0105);transform-origin:0 0;-webkit-text-stroke:0.22px #ffffff;">?</span>
<div class="a" style="left:956px;top:644px;width:17px;height:17px;border-radius:9px;background:#f3dc3b"></div>
<span class="t" style="left:962.09px;top:648.86px;font:normal 400 8.2px/1 'Liberation Sans', sans-serif;color:#3a3a2a;transform:scaleX(1.0133);transform-origin:0 0;-webkit-text-stroke:0.22px #3a3a2a;">1</span>
<svg style="left:0;top:0" width="1200" height="697" viewBox="0 0 1200 697"><path d="M16.8 17.6 H33.2" stroke="#d4d8e0" stroke-width="1.5"/>
<path d="M16.8 21.8 H33.2" stroke="#d4d8e0" stroke-width="1.5"/>
<path d="M16.8 26.2 H33.2" stroke="#d4d8e0" stroke-width="1.5"/>
<g fill="none" stroke="#ffffff" stroke-width="1.5" stroke-linejoin="round"><path d="M71 20.3 H76.6 A3.65 3.65 0 0 1 76.6 27.6 H74.2"/><path d="M73.6 17 L70.3 20.3 L73.6 23.6"/></g>
<g fill="none" stroke="#666c7e" stroke-width="1.5" stroke-linejoin="round"><path d="M106.6 20.3 H101 A3.65 3.65 0 0 0 101 27.6 H103.4"/><path d="M104 17 L107.3 20.3 L104 23.6"/></g>
<g fill="none" stroke="#d5dce4" stroke-width="1"><circle cx="477" cy="30" r="5.2"/><circle cx="477" cy="28.6" r="1.9"/><path d="M473.6 33.8 A3.6 3.6 0 0 1 480.4 33.8"/></g>
<g fill="none" stroke="#d5dce4" stroke-width="1.1"><rect x="538.2" y="25.4" width="11.4" height="9.2" rx="1.6"/><path d="M541.6 31.8 V29.5 M544 31.8 V28 M546.4 31.8 V30.4" stroke-width="1.2"/></g>
<g fill="none" stroke="#b9c0cd" stroke-width="1.3" stroke-linecap="round" stroke-linejoin="round"><path d="M876 29.2 A8.1 8.1 0 1 1 879 30.6 L874.6 31.6 Z"/><path d="M878 20 H886.5 M878 23.6 H883.6"/></g>
<path d="M941.7 18.2 V25.8 M937.9 22 H945.5" stroke="#9aa2b3" stroke-width="1.1"/>
<path d="M973.4 16.6 L980.6 21.2 L973.4 25.8 Z" fill="#fff"/>
<path d="M1162.6 20.6 L1156.4 15.6 V18.5 C1152.4 18.8 1150 21.6 1149.8 26 C1151.4 23.8 1153.4 22.9 1156.4 22.9 V25.8 Z" fill="#fff"/>
<path d="M21.3 57 H29.4 M25.35 57 V65.4" stroke="#1f3350" stroke-width="1.7" stroke-linecap="round" fill="none"/>
<g fill="none" stroke="#e1e5eb" stroke-width="1.35" stroke-linejoin="round" stroke-linecap="round"><path d="M35.35 108.60 L35.10 109.20 L34.52 109.68 L34.00 110.05 L33.81 110.51 L33.85 111.17 L33.82 111.92 L33.45 112.44 L32.79 112.56 L32.06 112.38 L31.48 112.24 L31.00 112.43 L30.50 112.90 L29.88 113.30 L29.25 113.27 L28.77 112.77 L28.49 112.09 L28.21 111.58 L27.73 111.37 L27.03 111.26 L26.36 110.99 L26.06 110.44 L26.21 109.75 L26.57 109.12 L26.75 108.60 L26.57 108.08 L26.21 107.45 L26.06 106.76 L26.36 106.21 L27.03 105.94 L27.73 105.83 L28.21 105.62 L28.49 105.11 L28.77 104.43 L29.25 103.93 L29.88 103.90 L30.50 104.30 L31.00 104.77 L31.48 104.96 L32.06 104.82 L32.79 104.64 L33.45 104.76 L33.82 105.28 L33.85 106.03 L33.81 106.69 L34.00 107.15 L34.52 107.52 L35.10 108.00 Z"/><path d="M20.5 107.4 Q21.3 106.1 22.1 107.4 L26.7 114.6 Q27.3 115.9 25.9 115.9 L16.8 115.9 Q15.5 115.8 16.2 114.6 Z" fill="#2b3042"/><path d="M30.8 113.8 A5.2 5.2 0 1 1 22.7 119.2 A7.1 7.1 0 0 0 30.8 113.8 Z" fill="#2b3042"/></g>
<g fill="none" stroke="#e1e5eb" stroke-width="1.35" stroke-linejoin="round" stroke-linecap="round"><rect x="17.2" y="160.2" width="16.1" height="16.1" rx="4"/><circle cx="22.5" cy="164.6" r="2.1"/><path d="M17.4 170.6 Q20 168 22.6 170 T27.6 169.3 T33.2 166.2"/><path d="M18 174.6 Q20.6 171.8 23.2 173.4 T28 172.8 T33.2 169.8"/></g>
<g fill="none" stroke="#e1e5eb" stroke-width="1.35" stroke-linejoin="round" stroke-linecap="round"><path d="M24.6 214.2 A8.1 8.1 0 1 0 32.7 222.3 L26 222.3 Q24.6 222.3 24.6 221 Z"/><path d="M27.6 213 A6.2 6.2 0 0 1 33.6 219.2 L28.6 219.2 Q27.6 219.2 27.6 218.2 Z"/></g>
<g fill="none" stroke="#e1e5eb" stroke-width="1.35" stroke-linejoin="round" stroke-linecap="round"><rect x="16.8" y="266.8" width="16.9" height="16.9" rx="4.6"/><path d="M16.8 271.7 H33.7 M21.4 267 L20.8 271.5 M25.3 267 V271.5 M29.2 267 L29.8 271.5"/><circle cx="25.1" cy="277.3" r="3.2"/><path d="M24.1 275.9 L26.6 277.3 L24.1 278.7 Z" stroke-width="1"/></g>
<g fill="none" stroke="#e1e5eb" stroke-width="1.35" stroke-linejoin="round" stroke-linecap="round"><rect x="17.3" y="320.2" width="5.6" height="16.4" rx="2.6"/><circle cx="20.1" cy="333.5" r="0.7" fill="#e1e5eb"/><path d="M26 324.6 Q26.2 323 27.4 324.2 L32.8 330.6 Q33.6 331.6 33.5 332.8 L33.5 335 Q33.4 336.4 32 336.4 L26.2 336.4 Q24.8 336.2 25.6 335 L31.6 328.8"/><path d="M26 324.6 V331.6"/></g>
<g fill="none" stroke="#e1e5eb" stroke-width="1.35" stroke-linejoin="round" stroke-linecap="round"><path d="M16.9 377 Q16.9 374.1 19.6 374.1 L22.4 374.1 Q23.6 374.1 24.6 375 L26.4 376.6 Q27.2 377.3 28.4 377.3 L30.8 377.3 Q33.7 377.3 33.7 380.2 L33.7 387.4 Q33.7 390.3 30.8 390.3 L19.8 390.3 Q16.9 390.3 16.9 387.4 Z"/><path d="M16.9 380.8 H33.7"/></g>
<rect x="16.900000000000002" y="428.3" width="4.4" height="4.4" rx="1.2" fill="none" stroke="#e1e5eb" stroke-width="1.3"/>
<rect x="22.900000000000002" y="428.3" width="4.4" height="4.4" rx="1.2" fill="none" stroke="#e1e5eb" stroke-width="1.3"/>
<rect x="28.900000000000002" y="428.3" width="4.4" height="4.4" rx="1.2" fill="none" stroke="#e1e5eb" stroke-width="1.3"/>
<rect x="16.900000000000002" y="433.8" width="4.4" height="4.4" rx="1.2" fill="none" stroke="#e1e5eb" stroke-width="1.3"/>
<rect x="28.900000000000002" y="433.8" width="4.4" height="4.4" rx="1.2" fill="none" stroke="#e1e5eb" stroke-width="1.3"/>
<rect x="16.900000000000002" y="439.3" width="4.4" height="4.4" rx="1.2" fill="none" stroke="#e1e5eb" stroke-width="1.3"/>
<rect x="22.900000000000002" y="439.3" width="4.4" height="4.4" rx="1.2" fill="none" stroke="#e1e5eb" stroke-width="1.3"/>
<rect x="28.900000000000002" y="439.3" width="4.4" height="4.4" rx="1.2" fill="none" stroke="#e1e5eb" stroke-width="1.3"/>
<g fill="none" stroke="#e1e5eb" stroke-width="1.25" stroke-linejoin="round" transform="rotate(-8 25 664)"><path d="M22.2 654.5999999999999 Q23.19 659.81 28.4 660.8 Q23.19 661.79 22.2 667.0 Q21.21 661.79 16.0 660.8 Q21.21 659.81 22.2 654.5999999999999 Z"/><path d="M29.7 664.0999999999999 Q30.37 667.63 33.9 668.3 Q30.37 668.97 29.7 672.5 Q29.03 668.97 25.5 668.3 Q29.03 667.63 29.7 664.0999999999999 Z"/></g>
<path d="M72 57 H82.4 V59.3 H78.4 V69.7 H76 V59.3 H72 Z" fill="#dde9f7"/>
<rect x="105.3" y="56.1" width="15.2" height="14.5" fill="#c6d9ef"/>
<path d="M148.8 56.6 L156.8 70 L140.8 70 Z" fill="#c6d9ef"/>
<circle cx="184.3" cy="63.3" r="7.5" fill="#c6d9ef"/>
<g fill="none" stroke="#c6d9ef" stroke-width="1"><path d="M212 67 L224.3 55.2 M219.8 55.4 L224.3 55.2 L224.1 59.6 M216.4 70.8 L227.6 60"/></g>
<path d="M263.4 55.6 L252.2 65 L254.4 67.4 Z" fill="#c6d9ef"/><path d="M251.4 65.8 L253.6 68.1 Q251.6 70.4 249.6 70.6 Q247.2 70.6 247.6 68.6 Q248.4 66.4 251.4 65.8 Z" fill="#e8f0fa"/>
<circle cx="282.2" cy="57.6" r="1.7" fill="#b4b9b4"/>
<circle cx="282.2" cy="63.4" r="1.7" fill="#b4b9b4"/>
<circle cx="282.2" cy="69.2" r="1.7" fill="#b4b9b4"/>
<path d="M0 697 L0 690.5 A6.5 6.5 0 0 0 6.5 697 Z" fill="#0a0d12"/>
<text x="74.2" y="156.8" font-family="Liberation Sans, sans-serif" font-weight="700" font-size="16.6" fill="#cfe3f8">A</text>
<text x="75.2" y="170.4" font-family="Liberation Sans, sans-serif" font-weight="700" font-size="16" fill="#cfe3f8">a</text>
<rect x="87.6" y="148" width="16.6" height="9" rx="1.6" fill="#4a7cc2"/>
<path d="M87.6 162 H104.2 M87.6 165.7 H104.2 M87.6 169.3 H99" stroke="#5d81b2" stroke-width="1.4"/>
<text x="73.4" y="217.6" font-family="Liberation Sans, sans-serif" font-weight="700" font-size="24.4" fill="#cfe3f8">A</text>
<rect x="86.3" y="210.8" width="18" height="18" rx="1.6" fill="#4a86d8"/>
<text x="90" y="224.6" font-family="Liberation Serif, serif" font-style="italic" font-size="15.5" fill="#eaf2fc">a</text>
<circle cx="89" cy="271.3" r="13" fill="none" stroke="#4a86d8" stroke-width="4"/>
<path d="M76 271.3 A13 13 0 0 1 91.3 258.5" fill="none" stroke="#aac9f0" stroke-width="4"/>
<circle cx="89" cy="271.3" r="9.3" fill="#3c5f97"/>
<text x="89" y="274.90000000000003" text-anchor="middle" font-family="Liberation Sans, sans-serif" font-size="10" fill="#eef4fc">%</text>
<clipPath id="c4"><rect x="74" y="313" width="30" height="21.6" rx="2.6"/></clipPath>
<g clip-path="url(#c4)"><rect x="74" y="313" width="30" height="21.6" fill="#4a86d8"/><circle cx="97.5" cy="331" r="9" fill="#8db3e8"/><ellipse cx="84.5" cy="334" rx="10.5" ry="7" fill="#c6dbf5"/><circle cx="82.8" cy="319.3" r="2.2" fill="#c6dbf5"/></g>
<rect x="76.6" y="338" width="25" height="4.2" rx="2.1" fill="#3f6092"/>
<path d="M83 384.8 H93 M89.3 374.8 V394.8 M89.3 374.8 H93 M89.3 394.8 H93" stroke="#3f6db2" stroke-width="1.2" fill="none"/>
<rect x="92.6" y="372.1" width="11.4" height="5.4" rx="2.7" fill="#4a86d8"/>
<rect x="92.6" y="382.1" width="11.4" height="5.4" rx="2.7" fill="#4a86d8"/>
<rect x="92.6" y="392.1" width="11.4" height="5.4" rx="2.7" fill="#4a86d8"/>
<circle cx="79" cy="384.8" r="4.4" fill="#cfe3f8"/><circle cx="79" cy="384.8" r="2" fill="#4a86d8"/>
<clipPath id="c6"><rect x="74" y="427" width="30" height="29" rx="3"/></clipPath>
<g clip-path="url(#c6)"><rect x="74" y="427" width="14.2" height="29" fill="#4a86d8"/><rect x="90" y="427" width="14" height="13.4" fill="#4a86d8"/><rect x="90" y="442.4" width="14" height="13.6" fill="#5b93e0"/><ellipse cx="81" cy="458" rx="9" ry="6.5" fill="#c6dbf5"/><circle cx="82.7" cy="436.7" r="2.7" fill="#c6dbf5"/><ellipse cx="100" cy="456" rx="10" ry="9.5" fill="#8db3e8"/></g>
<rect x="74" y="484" width="23.3" height="4.2" rx="2" fill="#3f6092"/><rect x="74" y="489.8" width="23.3" height="4.2" rx="2" fill="#3f6092"/>
<rect x="74" y="495.8" width="29.4" height="11.6" rx="2" fill="#4a86d8"/>
<circle cx="95.6" cy="503.4" r="4.6" fill="none" stroke="#dfeaf8" stroke-width="1.5"/>
<path d="M94 500.8 L101.6 506 L98.8 506.7 L101.4 511.6 L99.6 512.6 L97.2 507.6 L95 509.8 Z" fill="#ffffff" stroke="#2a3a50" stroke-width="0.5"/>
<g fill="none" stroke="#2c3a4b" stroke-width="1.3" stroke-linecap="round"><path d="M765.6 69.2 L767.6 61.8 Q768.2 60.6 769.4 61 L772.8 66.2"/><path d="M774.2 56.6 V61.6 M771.7 59.1 H776.7" stroke-width="1.1"/></g>
<circle cx="765.3" cy="69.7" r="1.7" fill="#2c3a4b"/><circle cx="772.6" cy="66.6" r="1.7" fill="#2c3a4b"/><circle cx="768.4" cy="61.4" r="1" fill="#2c3a4b"/>
<g fill="none" stroke="#2c3a4b" stroke-width="1.3" stroke-linecap="round"><circle cx="798.4" cy="64.3" r="5.2"/><path d="M798.4 61.4 V64.5 L800.3 66.2"/><path d="M792.5 59.6 Q793.4 58.2 795 57.8 M801.8 57.8 Q803.4 58.2 804.3 59.6"/></g>
<path d="M845.13 62.09 L846.65 62.12 L846.65 63.68 L845.13 63.71 L844.35 65.60 L845.40 66.70 L844.30 67.80 L843.20 66.75 L841.31 67.53 L841.28 69.05 L839.72 69.05 L839.69 67.53 L837.80 66.75 L836.70 67.80 L835.60 66.70 L836.65 65.60 L835.87 63.71 L834.35 63.68 L834.35 62.12 L835.87 62.09 L836.65 60.20 L835.60 59.10 L836.70 58.00 L837.80 59.05 L839.69 58.27 L839.72 56.75 L841.28 56.75 L841.31 58.27 L843.20 59.05 L844.30 58.00 L845.40 59.10 L844.35 60.20 Z" fill="none" stroke="#2c3a4b" stroke-width="1.15" stroke-linejoin="round"/><circle cx="840.5" cy="62.9" r="1.8" fill="none" stroke="#2c3a4b" stroke-width="1.25"/>
<g fill="none" stroke="#3a4a5f" stroke-width="1.25" stroke-linecap="round"><path d="M870 56.8 H861.8 Q859.5 56.8 859.5 59.1 V67 Q859.5 69.3 861.8 69.3 H870.6 Q872.9 69.3 872.9 67 V59.6"/><circle cx="865.5" cy="62.7" r="3.2"/><path d="M867.9 65.2 L870.6 68"/></g><circle cx="872.6" cy="56.6" r="0.9" fill="#3a4a5f"/>
<g fill="none" stroke="#41587a" stroke-width="1.4" stroke-linecap="round" stroke-linejoin="round"><rect x="866.8" y="125.3" width="13.3" height="9.7" rx="1.4"/><path d="M873.45 127.7 V132.7 M870.95 130.2 H875.95" stroke-width="1.2"/><path d="M866 160.6 Q869.6 155.6 873.6 155.6 Q877.6 155.6 881.4 160.6 Q877.6 165.6 873.6 165.6 Q869.6 165.6 866 160.6 Z" stroke-width="1.25"/><circle cx="873.6" cy="160.6" r="2.6" stroke-width="1.25"/><path d="M867.2 166.8 L880.2 154.4" stroke-width="1.25"/><path d="M870.4 216 H868.2 Q866.2 216 866.2 218 V222.7 Q866.2 224.7 868.2 224.7 H869.8 M877 224.7 H878.6 Q880.6 224.7 880.6 222.7 V218 Q880.6 216 878.6 216 H870"/><path d="M873.4 219.6 V228.4 M870.6 225.8 L873.4 228.6 L876.2 225.8"/><path d="M866.6 253.4 V249.4 Q866.6 247.6 868.4 247.6 H877.2"/><rect x="869.6" y="250.9" width="11" height="8" rx="1.5"/><path d="M866.4 279.4 H880.6 M871.4 279.2 Q871.6 277.2 873.5 277.2 Q875.4 277.2 875.6 279.2"/><path d="M867.7 280 L868.5 289.4 Q868.7 291.2 870.4 291.2 H876.6 Q878.3 291.2 878.5 289.4 L879.3 280"/><path d="M871.7 283.6 V287.8 M875.3 283.6 V287.8"/></g>
<g fill="none" stroke="#b6c1d1" stroke-width="1.3" stroke-linecap="round" stroke-linejoin="round"><path d="M870.2 189.8 H868.4 Q866.8 189.8 866.8 191.4 V196.8 Q866.8 198.4 868.4 198.4 H879 Q880.6 198.4 880.6 196.8 V191.4 Q880.6 189.8 879 189.8 H877.2"/><path d="M873.7 194.4 V184.8 M870.9 187.4 L873.7 184.6 L876.5 187.4"/></g>
<circle cx="867.7" cy="320.5" r="1.15" fill="#41587a"/>
<circle cx="873.6" cy="320.5" r="1.15" fill="#41587a"/>
<circle cx="879.5" cy="320.5" r="1.15" fill="#41587a"/>
<g fill="none" stroke="#3a4a5e" stroke-width="1.2" stroke-linecap="round" stroke-linejoin="round"><circle cx="1021.4" cy="127.4" r="7.2"/><path d="M1021.6 122.7 A4.7 4.7 0 0 0 1021.6 132.1 Z"/><path d="M1014.2 185.4 V183 Q1014.2 180.2 1017 180.2 H1026.2 Q1029 180.2 1029 183 V185.4 M1014.2 189 V191.4 Q1014.2 194.2 1017 194.2 H1026.2 Q1029 194.2 1029 191.4 V189"/><path d="M1018.6 184.3 H1024.6 M1021.6 184.3 V190.6"/><rect x="1014.2" y="240" width="14.8" height="14.6" rx="3"/><path d="M1015.6 301.4 H1028 M1015.6 313.4 H1028" stroke-width="1.1"/><path d="M1017.2 304.6 H1022.8 M1020 304.6 V310.4"/><path d="M1026.2 304.6 V310.4 M1025 305.8 L1026.2 304.4 L1027.4 305.8 M1025 309.2 L1026.2 310.6 L1027.4 309.2" stroke-width="1"/><path d="M1014.2 363.2 V362 Q1014.2 360 1016.2 360 H1018 M1025.4 360 H1027.2 Q1029.2 360 1029.2 362 V363.2 M1029.2 371.6 V372.8 Q1029.2 374.8 1027.2 374.8 H1025.4 M1018 374.8 H1016.2 Q1014.2 374.8 1014.2 372.8 V371.6"/><path d="M1016.2 367.4 Q1019 363.8 1021.7 363.8 Q1024.4 363.8 1027.2 367.4 Q1024.4 371 1021.7 371 Q1019 371 1016.2 367.4 Z" stroke-width="1.05"/><circle cx="1021.7" cy="367.4" r="1.7" stroke-width="1.05"/></g>
<text x="1021.6" y="249.7" text-anchor="middle" font-family="Liberation Sans, sans-serif" font-weight="700" font-size="6.3" fill="#3a4a5e" letter-spacing="0.1">ALT</text>
<path d="M1198.2 57.5 L1206 65 M1198.2 68.5 L1206 61" stroke="#5a6678" stroke-width="1.2" fill="none"/></svg></body></html>
